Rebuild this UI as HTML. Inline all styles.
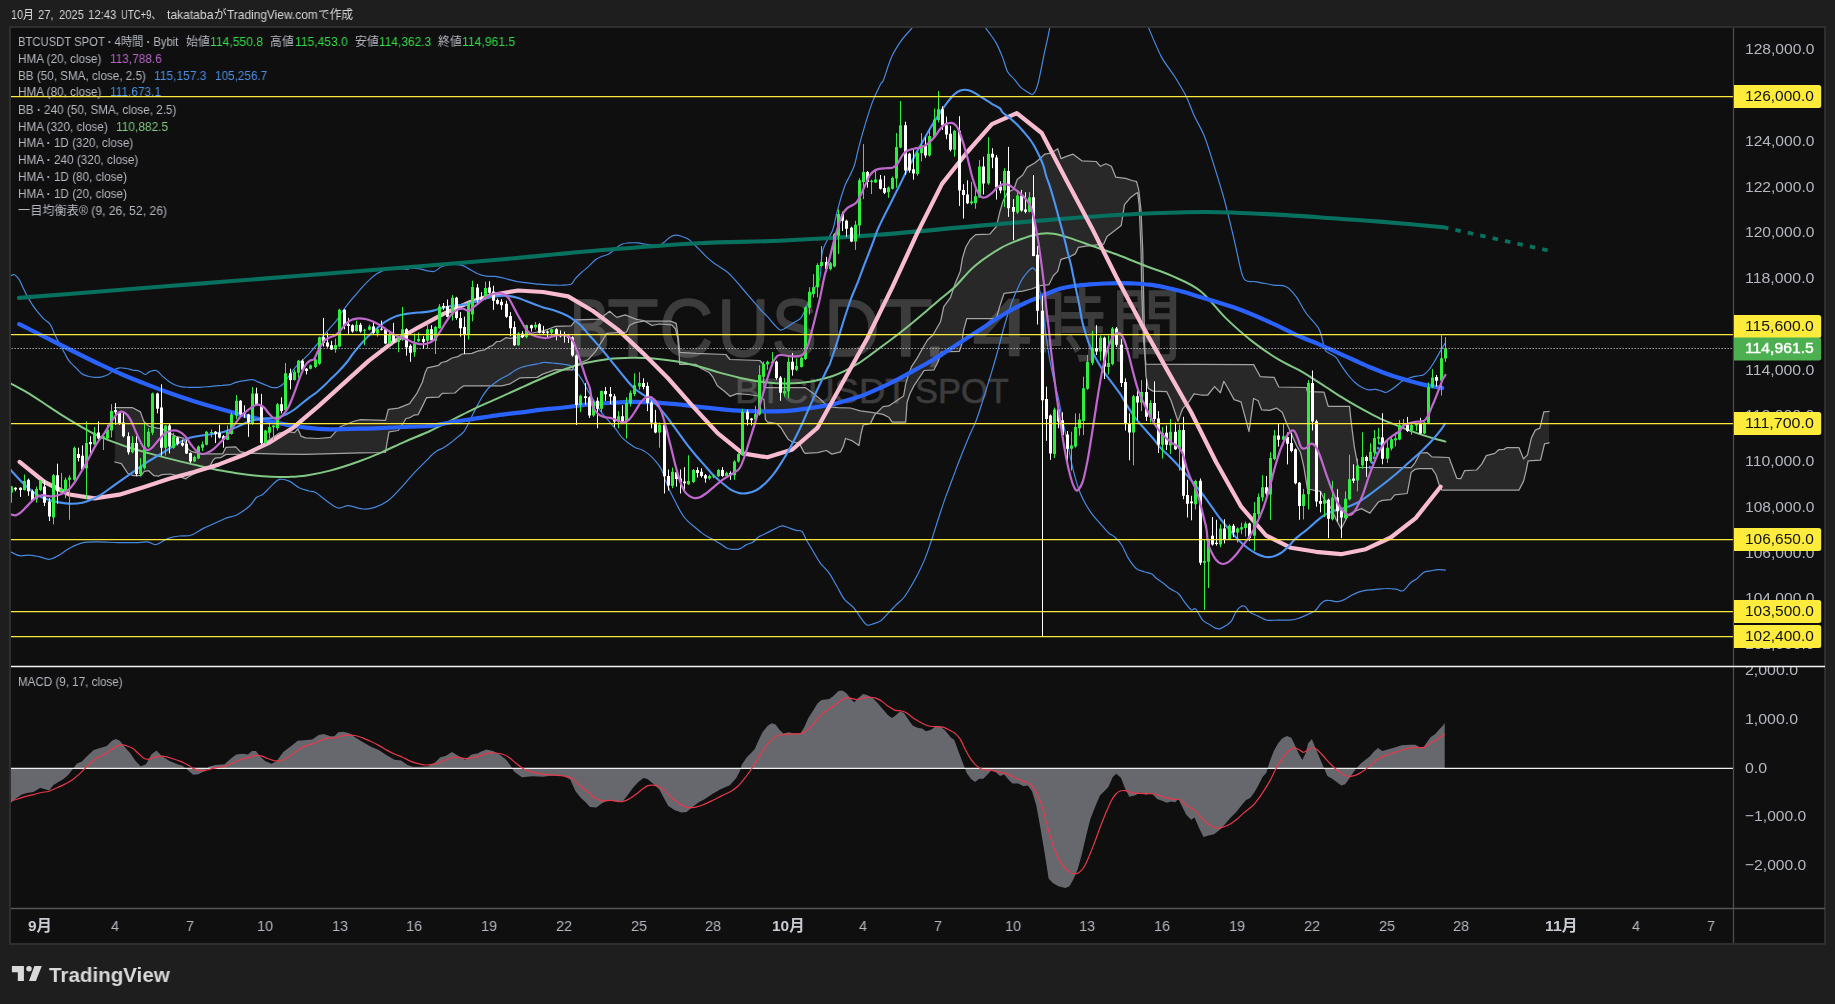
<!DOCTYPE html>
<html lang="ja"><head><meta charset="utf-8"><title>BTCUSDT SPOT 4時間</title>
<style>
html,body{margin:0;padding:0;background:#1e1e1e;}
body{width:1835px;height:1004px;position:relative;overflow:hidden;font-family:'Liberation Sans','Noto Sans CJK JP',sans-serif;}
#frame{position:absolute;left:9px;top:26px;width:1813px;height:915px;border:2px solid #2e2e2e;background:#0f0f0f;}
svg{position:absolute;left:0;top:0;}
.t{position:absolute;white-space:pre;line-height:1.117;transform-origin:0 50%;display:block;will-change:transform;}
</style></head><body>
<div id="frame"></div>
<svg width="1835" height="1004" viewBox="0 0 1835 1004">
<defs><clipPath id="cm"><rect x="11" y="28" width="1722" height="637.5"/></clipPath><clipPath id="cd"><rect x="11" y="667" width="1722" height="241"/></clipPath></defs>
<g font-family="'Liberation Sans','Noto Sans CJK JP',sans-serif" fill="#ffffff" stroke="#ffffff" stroke-width="1.3" stroke-linejoin="round" opacity="0.185" text-anchor="middle" clip-path="url(#cm)">
<text xml:space="preserve"><tspan x="589.7" y="356.3" font-size="81.6" textLength="40.4" lengthAdjust="spacingAndGlyphs">B</tspan><tspan x="633.0" y="356.3" font-size="81.6" textLength="51.5" lengthAdjust="spacingAndGlyphs">T</tspan><tspan x="686.4" y="356.3" font-size="81.6" textLength="54.1" lengthAdjust="spacingAndGlyphs">C</tspan><tspan x="743.4" y="356.3" font-size="81.6" textLength="52.2" lengthAdjust="spacingAndGlyphs">U</tspan><tspan x="794.4" y="356.3" font-size="81.6" textLength="45.1" lengthAdjust="spacingAndGlyphs">S</tspan><tspan x="851.9" y="356.3" font-size="81.6" textLength="56.2" lengthAdjust="spacingAndGlyphs">D</tspan><tspan x="905.9" y="356.3" font-size="81.6" textLength="54.1" lengthAdjust="spacingAndGlyphs">T</tspan><tspan x="936.9" y="356.3" font-size="81.6" textLength="22.7" lengthAdjust="spacingAndGlyphs">,</tspan> <tspan x="1002.2" y="356.3" font-size="81.6" textLength="60.1" lengthAdjust="spacingAndGlyphs">4</tspan><tspan x="1070.3" y="354.5" font-size="79" textLength="70.1" lengthAdjust="spacingAndGlyphs">時</tspan><tspan x="1146.3" y="354.5" font-size="79" textLength="70.2" lengthAdjust="spacingAndGlyphs">間</tspan></text>
<text xml:space="preserve" y="403.2" font-size="35" stroke-width="0.5" text-anchor="start"><tspan x="735.1" textLength="171.9" lengthAdjust="spacingAndGlyphs">BTCUSDT</tspan> <tspan x="914.9" textLength="94" lengthAdjust="spacingAndGlyphs">SPOT</tspan></text>
</g>
<g clip-path="url(#cm)" fill="none" stroke-linejoin="round" stroke-linecap="round">
<path d="M114.8,462.0 L121.3,463.7 L127.9,473.5 L133.3,475.7 L141.0,475.7 L144.2,471.3 L148.6,470.7 L154.0,475.7 L158.4,476.2 L161.7,474.6 L170.4,474.0 L176.9,475.7 L185.7,478.9 L187.8,477.3 L192.2,474.6 L209.6,466.9 L212.9,460.4 L215.1,458.2 L220.5,457.7 L226.0,454.4 L246.7,454.1 L263.0,444.0 L279.4,433.1 L285.9,431.5 L294.6,432.6 L297.9,428.8 L301.2,436.4 L305.6,437.8 L318.1,438.5 L330.6,437.3 L336.9,430.3 L340.7,426.5 L353.2,421.5 L360.7,419.7 L385.5,420.3 L388.3,409.3 L398.3,408.1 L409.6,403.6 L416.7,393.7 L422.3,382.3 L425.2,372.4 L427.3,367.9 L438.6,365.3 L441.5,362.5 L446.4,361.4 L452.1,358.0 L457.8,356.6 L462.0,354.0 L471.9,353.3 L477.6,351.2 L484.7,349.8 L488.9,346.9 L492.5,345.5 L496.7,341.5 L500.3,341.3 L505.9,337.7 L510.2,338.4 L521.5,336.7 L530.0,333.5 L544.2,330.6 L549.9,328.5 L555.5,326.4 L571.3,325.9 L575.6,319.8 L599.7,319.1 L609.6,311.3 L616.7,317.4 L625.2,314.8 L636.5,319.4 L643.6,320.5 L652.1,325.5 L659.2,324.0 L671.9,324.8 L675.5,329.0 L677.6,337.5 L679.0,351.7 L679.7,364.4 L696.0,364.4 L701.7,368.7 L708.8,372.2 L713.0,377.2 L717.3,385.7 L724.4,391.3 L730.0,396.3 L737.1,393.6 L748.4,394.5 L758.3,396.0 L764.0,399.5 L765.4,419.3 L767.5,422.2 L776.8,423.6 L781.0,427.8 L785.3,434.9 L788.1,439.2 L792.3,442.0 L799.4,443.4 L803.7,451.9 L805.1,453.3 L817.8,452.6 L826.3,450.5 L832.0,454.1 L840.5,451.9 L843.3,446.3 L845.5,438.5 L851.8,440.6 L858.9,445.6 L861.1,433.5 L863.2,425.0 L870.3,423.6 L874.5,415.1 L883.0,406.6 L888.7,405.9 L897.2,400.2 L903.6,396.0 L905.7,383.9 L907.8,376.8 L911.4,366.9 L917.0,358.4 L924.1,345.7 L927.5,340.0 L932.9,335.0 L940.5,321.8 L943.8,306.5 L950.4,297.7 L954.8,284.6 L960.2,271.4 L962.4,258.3 L965.7,247.3 L970.1,239.7 L975.6,234.6 L989.8,234.2 L996.4,226.5 L999.7,212.3 L1003.0,201.3 L1007.3,192.6 L1013.9,189.3 L1017.2,179.4 L1022.7,175.0 L1027.1,167.4 L1034.7,163.0 L1040.2,158.6 L1044.6,154.2 L1051.2,153.1 L1057.7,148.8 L1061.0,158.6 L1066.5,156.4 L1073.1,154.2 L1081.8,160.8 L1096.1,161.5 L1100.4,166.3 L1105.9,163.7 L1111.4,166.3 L1115.8,177.2 L1125.6,178.3 L1132.2,180.5 L1136.6,181.6 L1138.8,190.4 L1141.0,210.1 L1142.7,249.5 L1143.6,293.3 L1144.8,350.0 L1145.9,375.6 L1148.2,388.2 L1152.8,391.1 L1166.6,391.6 L1171.1,400.8 L1175.7,414.5 L1178.0,421.4 L1182.6,408.8 L1189.5,400.8 L1194.0,393.9 L1200.9,395.0 L1207.8,395.0 L1214.6,386.6 L1220.4,392.7 L1223.8,381.3 L1228.4,389.3 L1234.1,399.6 L1241.0,401.9 L1249.0,431.7 L1253.6,398.5 L1258.2,400.8 L1261.6,409.9 L1269.6,410.4 L1276.5,408.1 L1282.2,412.2 L1286.8,423.7 L1291.4,434.0 L1297.1,446.6 L1300.5,452.3 L1303.9,467.2 L1307.4,489.0 L1320.6,491.4 L1324.0,498.7 L1330.9,507.9 L1336.5,520.3 L1341.1,528.8 L1348.3,515.1 L1353.5,511.8 L1361.4,508.6 L1369.9,513.1 L1378.4,502.0 L1382.3,500.4 L1390.8,499.7 L1394.7,494.8 L1407.2,493.5 L1409.1,483.7 L1411.1,472.6 L1415.0,469.3 L1418.9,468.7 L1432.0,468.7 L1435.9,474.5 L1439.2,485.0 L1441.8,490.0 L1519.0,490.0 L1523.6,481.1 L1526.2,470.6 L1528.1,460.8 L1540.6,460.2 L1544.5,443.8 L1549.1,442.9 L1549.1,411.5 L1543.8,411.8 L1539.9,428.1 L1535.3,430.1 L1531.4,437.9 L1527.5,454.9 L1523.6,458.9 L1519.0,447.7 L1506.6,447.7 L1503.9,449.4 L1498.7,449.7 L1494.8,453.4 L1486.3,455.6 L1481.7,464.1 L1476.5,470.0 L1464.7,470.6 L1460.8,478.7 L1456.9,478.5 L1452.9,468.0 L1449.0,457.5 L1432.0,456.9 L1427.4,452.7 L1420.2,453.0 L1415.0,462.8 L1411.1,467.7 L1358.1,467.4 L1354.2,445.8 L1350.9,419.6 L1349.5,406.3 L1328.2,406.3 L1324.0,392.1 L1307.4,391.6 L1306.2,387.5 L1278.8,387.0 L1274.2,377.4 L1260.4,376.7 L1253.6,364.6 L1145.9,364.1 L1143.5,340.0 L1141.8,293.3 L1141.0,249.5 L1139.2,205.7 L1137.7,192.6 L1135.5,193.7 L1130.0,198.1 L1124.5,204.6 L1121.2,225.4 L1115.8,229.8 L1107.0,236.4 L1103.7,244.1 L1086.2,246.2 L1078.5,247.3 L1075.2,253.9 L1068.7,257.2 L1061.0,259.4 L1057.7,271.4 L1053.3,275.8 L1049.0,284.6 L1040.2,285.7 L1031.4,289.0 L1022.7,291.2 L1004.1,293.3 L999.7,306.5 L996.4,318.5 L966.8,318.5 L963.5,330.6 L961.7,344.3 L959.3,351.4 L941.1,352.0 L938.3,361.3 L934.0,369.8 L924.1,370.5 L919.9,376.8 L914.2,385.3 L909.9,393.8 L907.1,402.3 L905.7,422.2 L892.2,422.2 L888.7,417.2 L883.0,414.4 L871.7,412.3 L860.3,410.8 L850.4,408.0 L837.7,407.7 L827.8,406.6 L820.7,399.5 L812.2,392.4 L805.1,387.5 L764.0,387.5 L763.0,364.0 L759.8,360.5 L730.0,359.5 L725.8,354.5 L696.0,353.4 L679.7,352.4 L678.3,337.5 L676.2,323.3 L670.5,321.2 L643.6,321.2 L635.1,322.6 L629.4,325.5 L626.6,332.1 L606.8,333.3 L602.5,340.3 L595.4,351.7 L588.3,359.5 L573.5,365.8 L572.8,369.8 L555.5,369.6 L542.8,374.1 L537.1,377.4 L520.1,377.8 L515.9,380.2 L510.2,383.8 L501.7,385.9 L463.4,385.9 L459.2,389.1 L454.9,393.0 L442.2,393.4 L438.6,397.2 L426.6,397.6 L422.3,406.4 L418.1,414.6 L413.8,415.2 L409.6,417.8 L406.0,418.5 L403.9,422.0 L398.3,430.5 L389.0,431.9 L386.9,443.3 L385.5,452.5 L360.0,452.9 L305.0,454.4 L279.4,454.1 L248.9,453.3 L240.2,451.7 L235.8,446.8 L226.0,447.3 L222.7,453.9 L200.9,453.9 L192.2,451.7 L188.4,449.5 L183.5,438.1 L175.8,436.4 L161.7,428.6 L157.3,428.2 L148.6,426.1 L143.7,421.2 L140.4,411.9 L132.2,407.5 L114.8,407.5Z" fill="#ffffff" fill-opacity="0.105" stroke="none"/>
<path d="M114.8,407.5 L132.2,407.5 L140.4,411.9 L143.7,421.2 L148.6,426.1 L157.3,428.2 L161.7,428.6 L175.8,436.4 L183.5,438.1 L188.4,449.5 L192.2,451.7 L200.9,453.9 L222.7,453.9 L226.0,447.3 L235.8,446.8 L240.2,451.7 L248.9,453.3 L279.4,454.1 L305.0,454.4 L360.0,452.9 L385.5,452.5 L386.9,443.3 L389.0,431.9 L398.3,430.5 L403.9,422.0 L406.0,418.5 L409.6,417.8 L413.8,415.2 L418.1,414.6 L422.3,406.4 L426.6,397.6 L438.6,397.2 L442.2,393.4 L454.9,393.0 L459.2,389.1 L463.4,385.9 L501.7,385.9 L510.2,383.8 L515.9,380.2 L520.1,377.8 L537.1,377.4 L542.8,374.1 L555.5,369.6 L572.8,369.8 L573.5,365.8 L588.3,359.5 L595.4,351.7 L602.5,340.3 L606.8,333.3 L626.6,332.1 L629.4,325.5 L635.1,322.6 L643.6,321.2 L670.5,321.2 L676.2,323.3 L678.3,337.5 L679.7,352.4 L696.0,353.4 L725.8,354.5 L730.0,359.5 L759.8,360.5 L763.0,364.0 L764.0,387.5 L805.1,387.5 L812.2,392.4 L820.7,399.5 L827.8,406.6 L837.7,407.7 L850.4,408.0 L860.3,410.8 L871.7,412.3 L883.0,414.4 L888.7,417.2 L892.2,422.2 L905.7,422.2 L907.1,402.3 L909.9,393.8 L914.2,385.3 L919.9,376.8 L924.1,370.5 L934.0,369.8 L938.3,361.3 L941.1,352.0 L959.3,351.4 L961.7,344.3 L963.5,330.6 L966.8,318.5 L996.4,318.5 L999.7,306.5 L1004.1,293.3 L1022.7,291.2 L1031.4,289.0 L1040.2,285.7 L1049.0,284.6 L1053.3,275.8 L1057.7,271.4 L1061.0,259.4 L1068.7,257.2 L1075.2,253.9 L1078.5,247.3 L1086.2,246.2 L1103.7,244.1 L1107.0,236.4 L1115.8,229.8 L1121.2,225.4 L1124.5,204.6 L1130.0,198.1 L1135.5,193.7 L1137.7,192.6 L1139.2,205.7 L1141.0,249.5 L1141.8,293.3 L1143.5,340.0 L1145.9,364.1 L1253.6,364.6 L1260.4,376.7 L1274.2,377.4 L1278.8,387.0 L1306.2,387.5 L1307.4,391.6 L1324.0,392.1 L1328.2,406.3 L1349.5,406.3 L1350.9,419.6 L1354.2,445.8 L1358.1,467.4 L1411.1,467.7 L1415.0,462.8 L1420.2,453.0 L1427.4,452.7 L1432.0,456.9 L1449.0,457.5 L1452.9,468.0 L1456.9,478.5 L1460.8,478.7 L1464.7,470.6 L1476.5,470.0 L1481.7,464.1 L1486.3,455.6 L1494.8,453.4 L1498.7,449.7 L1503.9,449.4 L1506.6,447.7 L1519.0,447.7 L1523.6,458.9 L1527.5,454.9 L1531.4,437.9 L1535.3,430.1 L1539.9,428.1 L1543.8,411.8 L1549.1,411.5" stroke="#a4a4a4" stroke-width="1.25"/>
<path d="M114.8,462.0 L121.3,463.7 L127.9,473.5 L133.3,475.7 L141.0,475.7 L144.2,471.3 L148.6,470.7 L154.0,475.7 L158.4,476.2 L161.7,474.6 L170.4,474.0 L176.9,475.7 L185.7,478.9 L187.8,477.3 L192.2,474.6 L209.6,466.9 L212.9,460.4 L215.1,458.2 L220.5,457.7 L226.0,454.4 L246.7,454.1 L263.0,444.0 L279.4,433.1 L285.9,431.5 L294.6,432.6 L297.9,428.8 L301.2,436.4 L305.6,437.8 L318.1,438.5 L330.6,437.3 L336.9,430.3 L340.7,426.5 L353.2,421.5 L360.7,419.7 L385.5,420.3 L388.3,409.3 L398.3,408.1 L409.6,403.6 L416.7,393.7 L422.3,382.3 L425.2,372.4 L427.3,367.9 L438.6,365.3 L441.5,362.5 L446.4,361.4 L452.1,358.0 L457.8,356.6 L462.0,354.0 L471.9,353.3 L477.6,351.2 L484.7,349.8 L488.9,346.9 L492.5,345.5 L496.7,341.5 L500.3,341.3 L505.9,337.7 L510.2,338.4 L521.5,336.7 L530.0,333.5 L544.2,330.6 L549.9,328.5 L555.5,326.4 L571.3,325.9 L575.6,319.8 L599.7,319.1 L609.6,311.3 L616.7,317.4 L625.2,314.8 L636.5,319.4 L643.6,320.5 L652.1,325.5 L659.2,324.0 L671.9,324.8 L675.5,329.0 L677.6,337.5 L679.0,351.7 L679.7,364.4 L696.0,364.4 L701.7,368.7 L708.8,372.2 L713.0,377.2 L717.3,385.7 L724.4,391.3 L730.0,396.3 L737.1,393.6 L748.4,394.5 L758.3,396.0 L764.0,399.5 L765.4,419.3 L767.5,422.2 L776.8,423.6 L781.0,427.8 L785.3,434.9 L788.1,439.2 L792.3,442.0 L799.4,443.4 L803.7,451.9 L805.1,453.3 L817.8,452.6 L826.3,450.5 L832.0,454.1 L840.5,451.9 L843.3,446.3 L845.5,438.5 L851.8,440.6 L858.9,445.6 L861.1,433.5 L863.2,425.0 L870.3,423.6 L874.5,415.1 L883.0,406.6 L888.7,405.9 L897.2,400.2 L903.6,396.0 L905.7,383.9 L907.8,376.8 L911.4,366.9 L917.0,358.4 L924.1,345.7 L927.5,340.0 L932.9,335.0 L940.5,321.8 L943.8,306.5 L950.4,297.7 L954.8,284.6 L960.2,271.4 L962.4,258.3 L965.7,247.3 L970.1,239.7 L975.6,234.6 L989.8,234.2 L996.4,226.5 L999.7,212.3 L1003.0,201.3 L1007.3,192.6 L1013.9,189.3 L1017.2,179.4 L1022.7,175.0 L1027.1,167.4 L1034.7,163.0 L1040.2,158.6 L1044.6,154.2 L1051.2,153.1 L1057.7,148.8 L1061.0,158.6 L1066.5,156.4 L1073.1,154.2 L1081.8,160.8 L1096.1,161.5 L1100.4,166.3 L1105.9,163.7 L1111.4,166.3 L1115.8,177.2 L1125.6,178.3 L1132.2,180.5 L1136.6,181.6 L1138.8,190.4 L1141.0,210.1 L1142.7,249.5 L1143.6,293.3 L1144.8,350.0 L1145.9,375.6 L1148.2,388.2 L1152.8,391.1 L1166.6,391.6 L1171.1,400.8 L1175.7,414.5 L1178.0,421.4 L1182.6,408.8 L1189.5,400.8 L1194.0,393.9 L1200.9,395.0 L1207.8,395.0 L1214.6,386.6 L1220.4,392.7 L1223.8,381.3 L1228.4,389.3 L1234.1,399.6 L1241.0,401.9 L1249.0,431.7 L1253.6,398.5 L1258.2,400.8 L1261.6,409.9 L1269.6,410.4 L1276.5,408.1 L1282.2,412.2 L1286.8,423.7 L1291.4,434.0 L1297.1,446.6 L1300.5,452.3 L1303.9,467.2 L1307.4,489.0 L1320.6,491.4 L1324.0,498.7 L1330.9,507.9 L1336.5,520.3 L1341.1,528.8 L1348.3,515.1 L1353.5,511.8 L1361.4,508.6 L1369.9,513.1 L1378.4,502.0 L1382.3,500.4 L1390.8,499.7 L1394.7,494.8 L1407.2,493.5 L1409.1,483.7 L1411.1,472.6 L1415.0,469.3 L1418.9,468.7 L1432.0,468.7 L1435.9,474.5 L1439.2,485.0 L1441.8,490.0 L1519.0,490.0 L1523.6,481.1 L1526.2,470.6 L1528.1,460.8 L1540.6,460.2 L1544.5,443.8 L1549.1,442.9" stroke="#a4a4a4" stroke-width="1.25"/>
<path d="M11.1,275.6 C11.7,275.4 13.2,274.1 14.5,274.7 C15.8,275.3 17.4,276.8 18.9,279.1 C20.4,281.4 21.9,285.5 23.4,288.5 C24.9,291.6 26.4,294.8 27.9,297.4 C29.4,300.1 30.9,302.4 32.3,304.6 C33.8,306.8 34.9,308.5 36.8,310.9 C38.7,313.2 41.3,316.4 43.5,318.7 C45.7,320.9 48.4,321.7 50.2,324.3 C52.1,326.9 53.2,331.1 54.7,334.3 C56.2,337.5 57.5,340.1 59.2,343.2 C60.8,346.4 63.1,350.3 64.7,353.3 C66.4,356.3 67.5,358.9 69.2,361.1 C70.9,363.4 72.7,364.7 74.8,366.7 C76.8,368.8 79.3,371.8 81.5,373.4 C83.7,375.0 86.0,375.6 88.2,376.3 C90.4,377.0 92.7,377.4 94.9,377.4 C97.1,377.5 99.4,377.2 101.6,376.8 C103.8,376.3 106.3,375.6 108.3,374.5 C110.4,373.4 112.0,371.2 113.9,370.1 C115.7,368.9 117.4,368.1 119.5,367.8 C121.5,367.6 123.9,368.1 126.2,368.5 C128.4,368.9 130.6,369.6 132.9,370.1 C135.1,370.5 137.5,370.4 139.6,371.2 C141.6,371.9 143.5,374.5 145.2,374.5 C146.8,374.6 147.8,372.3 149.6,371.6 C151.5,371.0 154.3,369.8 156.3,370.5 C158.4,371.2 159.9,373.9 161.9,375.6 C164.0,377.4 166.4,379.7 168.6,381.2 C170.9,382.8 173.1,384.1 175.3,385.0 C177.6,386.0 179.8,386.4 182.0,386.8 C184.3,387.2 185.8,387.2 188.7,387.3 C191.7,387.3 196.2,387.4 199.9,387.3 C203.6,387.1 207.3,386.7 211.1,386.4 C214.8,386.0 219.1,385.5 222.2,385.3 C225.4,385.0 227.8,385.1 230.1,384.6 C232.3,384.1 233.2,383.0 235.6,382.3 C238.1,381.7 241.8,381.0 244.6,380.6 C247.4,380.1 250.2,379.4 252.4,379.7 C254.6,379.9 255.9,381.1 258.0,381.9 C260.0,382.7 262.5,383.7 264.7,384.6 C266.9,385.5 269.2,386.8 271.4,387.3 C273.6,387.7 276.0,387.9 278.1,387.3 C280.1,386.6 281.8,385.4 283.7,383.5 C285.5,381.5 287.2,378.4 289.3,375.6 C291.3,372.9 293.7,369.3 296.0,366.7 C298.2,364.1 300.4,362.2 302.7,360.0 C304.9,357.8 307.1,355.7 309.4,353.3 C311.6,350.9 313.8,348.3 316.1,345.5 C318.3,342.7 320.5,339.3 322.8,336.5 C325.0,333.8 327.2,331.3 329.5,328.7 C331.7,326.1 333.9,323.9 336.2,320.9 C338.4,317.9 340.7,314.0 342.9,310.9 C345.1,307.7 347.4,304.7 349.6,301.9 C351.8,299.1 354.1,296.7 356.3,294.1 C358.5,291.5 360.8,288.7 363.0,286.3 C365.2,283.9 367.5,281.6 369.7,279.6 C371.9,277.5 374.2,275.5 376.4,274.0 C378.6,272.5 380.9,271.5 383.1,270.6 C385.3,269.8 387.2,269.2 389.8,268.9 C392.4,268.5 395.8,268.3 398.7,268.4 C401.7,268.5 405.8,269.6 407.7,269.5 C409.6,269.5 408.1,268.3 410.0,268.2 C411.9,268.0 416.0,268.2 418.9,268.6 C421.9,269.1 425.3,270.4 427.9,270.9 C430.5,271.3 432.3,272.0 434.6,271.3 C436.8,270.6 438.7,268.0 441.3,266.8 C443.9,265.6 447.6,264.5 450.2,264.2 C452.8,263.8 454.7,264.3 456.9,264.6 C459.2,264.9 461.4,265.1 463.6,265.9 C465.9,266.8 468.1,268.5 470.3,269.7 C472.6,271.0 475.0,272.6 477.0,273.5 C479.1,274.5 480.7,274.8 482.6,275.3 C484.5,275.8 486.1,276.3 488.2,276.4 C490.2,276.6 492.7,276.3 494.9,276.4 C497.1,276.6 499.4,277.1 501.6,277.6 C503.8,278.0 505.7,278.7 508.3,279.3 C510.9,280.0 514.3,281.0 517.2,281.6 C520.2,282.1 523.2,282.3 526.2,282.7 C529.2,283.1 532.1,283.5 535.1,283.8 C538.1,284.1 541.1,284.5 544.0,284.7 C547.0,284.9 550.0,285.1 553.0,285.2 C556.0,285.2 558.9,285.3 561.9,285.2 C564.9,285.0 568.6,285.3 570.9,284.3 C573.1,283.2 573.5,280.7 575.3,278.7 C577.2,276.6 579.8,274.0 582.0,272.0 C584.3,269.9 586.5,268.4 588.7,266.4 C591.0,264.3 593.2,261.4 595.4,259.7 C597.7,258.0 599.9,257.3 602.1,256.3 C604.4,255.4 606.6,255.4 608.8,254.1 C611.1,252.8 613.3,250.2 615.5,248.5 C617.8,246.8 620.0,245.0 622.2,244.0 C624.5,243.1 626.3,243.1 628.9,242.9 C631.6,242.7 635.3,242.7 637.9,242.9 C640.5,243.1 642.4,243.7 644.6,244.0 C646.8,244.4 649.1,244.8 651.3,245.2 C653.5,245.5 655.8,246.8 658.0,246.3 C660.2,245.7 662.6,243.4 664.7,241.8 C666.7,240.2 668.4,238.0 670.3,236.9 C672.1,235.8 674.0,235.2 675.9,235.1 C677.7,235.0 679.4,235.6 681.4,236.2 C683.5,236.9 686.1,237.8 688.2,239.1 C690.2,240.4 691.7,242.1 693.7,244.0 C695.8,246.0 698.2,248.5 700.4,250.7 C702.7,253.0 704.9,255.4 707.1,257.4 C709.4,259.5 711.6,261.4 713.8,263.0 C716.1,264.7 718.3,266.0 720.5,267.5 C722.8,269.0 725.0,270.1 727.2,272.0 C729.5,273.8 731.7,276.3 733.9,278.7 C736.2,281.1 738.4,283.9 740.7,286.5 C742.9,289.1 745.1,291.7 747.4,294.3 C749.6,296.9 751.8,299.5 754.1,302.1 C756.3,304.7 758.5,307.5 760.8,310.0 C763.0,312.4 765.2,314.2 767.5,316.7 C769.7,319.1 771.9,322.2 774.2,324.5 C776.4,326.7 778.6,329.7 780.9,330.1 C783.1,330.4 785.3,328.0 787.6,326.7 C789.8,325.4 792.0,323.7 794.3,322.2 C796.5,320.7 798.9,320.4 801.0,317.8 C803.0,315.2 805.1,310.0 806.6,306.6 C808.0,303.2 808.6,300.6 809.9,297.7 C811.2,294.7 812.7,292.1 814.4,288.7 C816.1,285.4 818.6,283.9 820.0,277.6 C821.4,271.2 820.6,258.4 822.7,250.5 C824.8,242.6 830.4,236.0 832.7,230.0 C835.0,224.0 835.0,219.8 836.4,214.5 C837.8,209.2 839.4,203.0 840.9,198.0 C842.4,193.0 843.9,188.3 845.4,184.6 C846.9,180.9 848.4,178.8 849.9,175.6 C851.4,172.4 852.9,169.9 854.4,165.2 C855.9,160.5 857.3,152.9 858.8,147.2 C860.3,141.5 861.8,136.0 863.3,130.8 C864.8,125.6 866.3,120.6 867.8,115.9 C869.3,111.2 870.8,106.4 872.3,102.4 C873.8,98.4 875.3,95.2 876.8,92.0 C878.3,88.8 880.1,85.0 881.2,83.0 C882.3,81.0 881.7,84.4 883.5,80.0 C885.3,75.6 888.7,63.2 891.8,56.6 C894.8,49.9 898.3,44.8 901.6,40.1 C904.9,35.5 909.0,31.7 911.5,28.6 C914.0,25.6 915.6,23.2 916.4,22.1" stroke="#4689e0" stroke-width="1.2"/>
<path d="M981.0,15.0 C981.7,17.0 983.6,23.8 985.2,27.0 C986.8,30.2 988.6,31.8 990.5,34.5 C992.4,37.2 994.4,39.7 996.4,43.4 C998.4,47.1 1000.5,52.2 1002.4,56.9 C1004.3,61.6 1005.6,68.1 1007.6,71.8 C1009.6,75.5 1012.3,76.8 1014.4,79.3 C1016.5,81.8 1018.3,84.8 1020.3,86.8 C1022.3,88.8 1024.3,89.9 1026.3,91.2 C1028.3,92.5 1030.7,94.8 1032.3,94.5 C1033.9,94.2 1035.0,91.7 1036.0,89.7 C1037.0,87.7 1037.4,85.8 1038.3,82.3 C1039.2,78.8 1040.2,73.5 1041.2,68.8 C1042.2,64.1 1043.2,58.6 1044.2,53.9 C1045.2,49.2 1046.2,44.9 1047.2,40.4 C1048.2,35.9 1049.1,31.2 1049.9,27.0 C1050.7,22.8 1051.7,17.0 1052.0,15.0" stroke="#4689e0" stroke-width="1.2"/>
<path d="M1145.5,22.1 C1146.0,22.9 1145.5,21.2 1148.2,27.0 C1150.8,32.8 1156.9,48.4 1161.3,56.6 C1165.7,64.8 1170.4,69.7 1174.5,76.3 C1178.6,82.9 1182.7,89.5 1186.0,96.0 C1189.3,102.6 1191.2,109.2 1194.2,115.8 C1197.2,122.3 1200.8,127.3 1204.1,135.5 C1207.4,143.7 1210.6,154.7 1213.9,165.1 C1217.2,175.5 1220.5,185.9 1223.8,197.9 C1227.1,210.0 1230.9,225.9 1233.6,237.4 C1236.4,248.9 1238.3,259.9 1240.2,267.0 C1242.1,274.1 1242.4,277.7 1245.2,280.1 C1247.9,282.6 1252.0,280.9 1256.7,281.8 C1261.3,282.6 1268.2,284.2 1273.1,285.1 C1278.0,285.9 1282.4,284.8 1286.2,286.7 C1290.1,288.6 1292.8,292.2 1296.1,296.6 C1299.4,300.9 1302.1,307.5 1306.0,313.0 C1309.8,318.5 1316.0,323.4 1319.1,329.4 C1322.2,335.4 1323.1,345.0 1324.7,348.9 C1326.3,352.8 1327.1,351.6 1328.9,353.0 C1330.7,354.4 1333.7,355.1 1335.7,357.1 C1337.8,359.2 1339.1,362.3 1341.2,365.3 C1343.3,368.3 1345.8,372.1 1348.1,375.0 C1350.4,377.9 1352.7,380.4 1355.0,382.5 C1357.3,384.6 1359.5,386.1 1361.8,387.3 C1364.1,388.5 1366.4,389.5 1368.7,389.8 C1371.0,390.1 1373.3,389.1 1375.6,389.4 C1377.9,389.7 1380.7,390.9 1382.4,391.4 C1384.1,391.9 1384.5,392.7 1385.9,392.5 C1387.3,392.3 1389.0,391.2 1390.7,390.1 C1392.4,389.0 1394.2,387.6 1396.2,386.0 C1398.2,384.4 1400.7,381.9 1403.0,380.5 C1405.3,379.1 1407.6,378.4 1409.9,377.7 C1412.2,377.0 1414.5,376.6 1416.8,376.1 C1419.1,375.6 1421.6,375.8 1423.7,374.7 C1425.8,373.6 1427.4,371.8 1429.2,369.5 C1431.0,367.2 1432.8,364.2 1434.6,361.2 C1436.4,358.2 1438.4,354.6 1440.1,351.6 C1441.8,348.6 1444.2,344.8 1445.0,343.4" stroke="#4689e0" stroke-width="1.2"/>
<path d="M10.5,551.8 C12.1,552.4 16.5,555.2 19.7,555.7 C22.9,556.3 26.3,554.9 29.6,555.1 C32.9,555.2 36.2,556.0 39.4,556.7 C42.7,557.4 46.0,559.6 49.3,559.3 C52.6,559.1 55.9,556.9 59.2,555.1 C62.5,553.2 65.2,550.5 69.0,548.5 C72.9,546.5 77.3,544.0 82.2,542.9 C87.1,541.8 92.6,542.0 98.6,541.9 C104.6,541.9 111.8,542.5 118.3,542.6 C124.9,542.7 133.1,542.7 138.1,542.6 C143.0,542.5 144.9,541.6 147.9,541.9 C150.9,542.2 152.9,545.1 156.1,544.5 C159.4,544.0 163.8,540.0 167.7,538.6 C171.5,537.2 175.3,536.5 179.2,536.0 C183.0,535.4 186.6,536.6 190.7,535.3 C194.8,534.0 199.4,530.3 203.8,528.1 C208.2,525.9 213.1,523.9 217.0,522.2 C220.8,520.5 223.5,519.1 226.8,517.9 C230.1,516.7 232.9,517.0 236.7,515.0 C240.5,512.9 246.5,508.7 249.8,505.7 C253.1,502.8 254.2,499.4 256.4,497.5 C258.6,495.6 260.2,496.4 263.0,494.2 C265.7,492.0 270.1,486.8 272.8,484.4 C275.6,481.9 276.7,480.0 279.4,479.4 C282.2,478.9 286.0,479.7 289.3,481.1 C292.6,482.5 295.9,486.0 299.1,487.7 C302.4,489.3 306.3,490.1 309.0,491.0 C311.7,491.8 312.3,490.7 315.6,492.6 C318.9,494.5 324.9,499.9 328.7,502.5 C332.6,505.0 335.3,507.5 338.6,508.0 C341.9,508.6 344.3,505.6 348.5,505.7 C352.6,505.9 358.9,508.8 363.2,509.0 C367.6,509.3 370.6,508.8 374.8,507.4 C378.9,506.0 383.5,504.1 387.9,500.8 C392.3,497.5 396.7,492.3 401.1,487.7 C405.4,483.0 409.8,477.5 414.2,472.9 C418.6,468.2 424.7,462.4 427.4,459.7 C430.0,457.0 428.4,458.1 430.0,456.7 C431.6,455.2 434.5,452.6 436.7,451.1 C438.9,449.6 441.2,449.0 443.4,447.7 C445.6,446.4 447.9,444.9 450.1,443.2 C452.3,441.6 454.6,439.5 456.8,437.7 C459.0,435.8 461.7,434.3 463.5,432.1 C465.4,429.8 466.5,427.1 468.0,424.3 C469.5,421.5 471.0,418.3 472.4,415.3 C473.9,412.3 475.2,409.6 476.9,406.4 C478.6,403.2 480.6,399.3 482.5,396.3 C484.4,393.4 486.0,390.7 488.1,388.5 C490.1,386.3 492.6,384.6 494.8,382.9 C497.0,381.3 499.3,379.8 501.5,378.5 C503.7,377.2 506.0,376.4 508.2,375.1 C510.4,373.8 512.7,371.9 514.9,370.6 C517.1,369.3 519.0,368.2 521.6,367.3 C524.2,366.4 527.6,365.7 530.5,365.1 C533.5,364.4 537.2,363.9 539.5,363.5 C541.7,363.0 541.7,362.4 543.9,362.4 C546.2,362.3 549.5,362.7 552.9,363.0 C556.2,363.4 561.1,363.9 564.0,364.4 C567.0,364.8 568.9,364.7 570.8,365.7 C572.6,366.8 573.4,368.3 575.2,370.6 C577.1,372.9 579.7,376.0 581.9,379.6 C584.2,383.1 586.4,388.0 588.6,391.9 C590.9,395.8 593.1,399.5 595.3,403.0 C597.6,406.6 599.8,410.1 602.0,413.1 C604.3,416.1 606.5,418.3 608.7,420.9 C611.0,423.5 613.2,425.9 615.4,428.7 C617.7,431.5 619.9,435.2 622.1,437.7 C624.4,440.1 626.6,441.6 628.8,443.2 C631.1,444.9 633.3,446.6 635.5,447.7 C637.8,448.8 640.0,448.8 642.2,450.0 C644.5,451.1 646.7,452.6 648.9,454.4 C651.2,456.3 653.6,458.7 655.6,461.1 C657.7,463.5 659.7,466.1 661.2,468.9 C662.7,471.7 663.3,474.5 664.6,477.9 C665.9,481.2 667.6,485.7 669.1,489.0 C670.5,492.4 672.0,495.0 673.5,498.0 C675.0,501.0 676.5,504.1 678.0,506.9 C679.5,509.7 680.8,512.3 682.5,514.7 C684.1,517.2 686.0,519.4 688.0,521.4 C690.1,523.5 692.5,525.2 694.7,527.0 C697.0,528.9 699.2,530.9 701.4,532.6 C703.7,534.3 705.9,535.8 708.2,537.1 C710.4,538.4 712.8,539.3 714.9,540.4 C716.9,541.6 718.4,542.5 720.4,543.8 C722.5,545.1 725.1,547.3 727.1,548.3 C729.2,549.2 730.7,549.3 732.7,549.4 C734.8,549.5 737.2,549.7 739.4,548.9 C741.7,548.2 743.9,546.0 746.1,544.9 C748.4,543.8 750.8,543.5 752.8,542.2 C754.9,540.9 756.4,538.5 758.4,537.1 C760.5,535.7 762.9,534.8 765.1,533.7 C767.4,532.6 769.6,531.5 771.8,530.4 C774.1,529.3 776.7,527.8 778.5,527.0 C780.4,526.3 781.1,525.7 783.0,525.9 C784.9,526.1 787.5,527.4 789.7,528.1 C791.9,528.9 794.4,529.8 796.4,530.4 C798.4,530.9 800.3,529.8 802.0,531.5 C803.7,533.2 804.8,537.2 806.7,540.5 C808.6,543.9 811.2,548.0 813.4,551.7 C815.6,555.4 817.5,559.3 820.1,562.9 C822.7,566.4 826.3,569.0 829.0,572.9 C831.8,576.8 834.3,581.9 836.9,586.3 C839.5,590.8 841.9,596.2 844.7,599.7 C847.5,603.3 850.8,604.4 853.6,607.6 C856.4,610.7 859.2,615.8 861.4,618.7 C863.7,621.6 865.0,624.2 867.0,625.0 C869.1,625.8 871.5,624.3 873.7,623.6 C876.0,623.0 878.0,622.7 880.4,621.0 C882.8,619.2 885.6,615.8 888.2,613.1 C890.9,610.5 893.5,607.5 896.1,604.9 C898.7,602.3 901.3,600.8 903.9,597.5 C906.5,594.2 909.3,589.3 911.7,585.2 C914.1,581.1 916.2,577.4 918.4,572.9 C920.6,568.5 922.9,564.0 925.1,558.4 C927.3,552.8 929.6,546.1 931.8,539.4 C934.0,532.7 936.3,525.1 938.5,518.2 C940.8,511.3 943.0,504.4 945.2,498.1 C947.5,491.8 949.7,486.2 951.9,480.2 C954.2,474.3 955.9,469.4 958.6,462.3 C961.4,455.3 965.5,444.9 968.5,437.8 C971.5,430.7 973.9,426.6 976.4,420.0 C978.9,413.4 981.1,405.8 983.4,398.5 C985.7,391.2 988.1,383.9 990.4,376.2 C992.7,368.5 995.0,360.9 997.3,352.5 C999.6,344.1 1002.0,334.1 1004.3,326.0 C1006.6,317.9 1009.0,310.2 1011.3,303.7 C1013.6,297.2 1016.6,290.9 1018.3,287.0 C1020.0,283.1 1020.2,282.5 1021.7,280.0 C1023.2,277.5 1025.7,274.1 1027.5,272.1 C1029.3,270.1 1031.3,268.3 1032.5,267.9 C1033.7,267.5 1034.1,268.5 1034.9,269.6 C1035.7,270.7 1036.6,271.1 1037.4,274.6 C1038.2,278.1 1038.7,284.1 1039.7,290.4 C1040.6,296.7 1041.9,304.6 1043.0,312.3 C1044.1,320.0 1045.1,328.7 1046.2,336.4 C1047.3,344.1 1048.3,351.0 1049.5,358.3 C1050.8,365.6 1052.4,373.6 1053.9,380.2 C1055.4,386.8 1057.0,391.9 1058.3,397.7 C1059.6,403.6 1060.5,409.8 1061.6,415.2 C1062.7,420.7 1063.8,425.5 1064.9,430.6 C1066.0,435.7 1067.1,440.6 1068.1,445.9 C1069.2,451.2 1070.2,456.6 1071.4,462.3 C1072.7,468.1 1074.4,475.0 1075.9,480.2 C1077.4,485.4 1078.7,489.5 1080.4,493.6 C1082.1,497.7 1083.9,501.3 1086.0,504.8 C1088.0,508.3 1090.3,511.7 1092.7,514.8 C1095.1,518.0 1097.9,520.8 1100.5,523.8 C1103.1,526.8 1105.9,530.5 1108.3,532.7 C1110.7,535.0 1112.8,535.1 1115.0,537.2 C1117.2,539.2 1119.5,541.5 1121.7,545.0 C1123.9,548.5 1126.0,554.5 1128.4,558.4 C1130.8,562.3 1133.6,566.2 1136.2,568.5 C1138.8,570.7 1141.5,570.9 1144.1,571.8 C1146.7,572.7 1149.7,572.9 1151.9,574.0 C1154.0,575.2 1154.9,577.3 1156.9,578.8 C1158.8,580.4 1161.4,581.7 1163.7,583.4 C1166.0,585.1 1168.1,587.4 1170.6,589.1 C1173.1,590.9 1176.3,591.6 1178.6,593.7 C1180.9,595.8 1182.2,599.1 1184.3,601.7 C1186.4,604.4 1189.3,608.5 1191.2,609.8 C1193.1,611.0 1193.9,607.4 1195.8,609.1 C1197.7,610.8 1200.4,617.5 1202.7,620.1 C1205.0,622.7 1207.4,623.3 1209.5,624.6 C1211.6,626.0 1213.5,627.4 1215.3,628.1 C1217.0,628.8 1218.1,629.1 1219.8,628.8 C1221.6,628.4 1223.7,627.0 1225.6,625.8 C1227.5,624.5 1229.6,623.5 1231.3,621.2 C1233.0,618.9 1234.3,614.5 1235.9,612.0 C1237.4,609.6 1238.9,607.7 1240.5,606.8 C1242.0,605.8 1243.5,605.4 1245.0,606.3 C1246.6,607.2 1247.5,610.4 1249.6,612.0 C1251.7,613.7 1254.8,614.6 1257.6,615.9 C1260.5,617.3 1263.4,619.4 1266.8,620.1 C1270.2,620.7 1274.4,620.1 1278.2,620.1 C1282.1,620.1 1286.2,620.4 1289.7,620.1 C1293.1,619.8 1295.8,619.2 1298.8,618.2 C1301.9,617.3 1305.3,615.6 1308.0,614.3 C1310.7,613.1 1312.8,612.6 1314.9,610.9 C1317.0,609.2 1318.9,605.7 1320.6,604.0 C1322.3,602.3 1323.5,601.2 1325.2,600.6 C1326.9,600.0 1328.8,600.4 1330.9,600.6 C1333.0,600.8 1335.5,601.9 1337.8,601.7 C1340.1,601.6 1342.4,600.5 1344.6,599.5 C1346.9,598.4 1349.2,596.6 1351.5,595.3 C1353.8,594.1 1356.1,593.0 1358.4,592.1 C1360.7,591.3 1362.6,590.7 1365.3,590.3 C1367.9,589.9 1371.0,589.9 1374.4,589.6 C1377.8,589.3 1382.2,588.5 1385.9,588.5 C1389.5,588.4 1393.3,588.8 1396.2,589.1 C1399.0,589.5 1400.6,591.9 1403.0,590.8 C1405.5,589.6 1408.8,584.3 1411.0,582.3 C1413.3,580.3 1414.7,580.5 1416.8,578.8 C1418.9,577.2 1421.4,573.8 1423.6,572.4 C1425.9,571.1 1428.0,571.3 1430.5,570.8 C1433.0,570.4 1436.0,569.8 1438.5,569.7 C1441.0,569.6 1444.3,570.1 1445.4,570.1" stroke="#4689e0" stroke-width="1.2"/>
<path d="M10.0,383.1 C12.9,384.7 21.6,389.2 27.4,392.7 C33.2,396.2 39.1,400.2 44.9,404.0 C50.7,407.8 56.5,411.7 62.3,415.3 C68.1,418.9 74.0,422.5 79.8,425.8 C85.6,429.1 91.4,432.6 97.2,435.4 C103.0,438.2 108.8,440.2 114.6,442.4 C120.4,444.6 126.3,446.7 132.1,448.5 C137.9,450.3 143.7,451.8 149.5,453.4 C155.3,455.0 161.2,456.6 167.0,458.1 C172.8,459.6 178.6,461.0 184.4,462.4 C190.2,463.8 196.0,465.1 201.8,466.4 C207.6,467.7 213.5,469.2 219.3,470.3 C225.1,471.4 230.9,472.3 236.7,473.2 C242.5,474.1 248.4,474.9 254.2,475.5 C260.0,476.1 265.8,476.5 271.6,476.7 C277.4,476.9 283.2,477.1 289.0,476.9 C294.8,476.7 299.7,476.6 306.5,475.5 C313.3,474.4 321.3,472.9 330.0,470.6 C338.7,468.3 350.1,464.6 358.7,461.5 C367.3,458.4 374.0,455.6 381.6,452.3 C389.2,449.0 396.4,445.4 404.5,441.8 C412.6,438.2 422.0,434.7 430.0,431.0 C438.0,427.3 444.9,423.5 452.3,419.8 C459.8,416.1 467.2,412.1 474.7,408.6 C482.1,405.1 489.6,402.0 497.0,398.6 C504.4,395.2 511.9,391.9 519.4,388.5 C526.9,385.1 534.3,381.7 541.7,378.5 C549.1,375.3 556.5,372.1 564.0,369.5 C571.5,366.9 578.9,364.6 586.4,362.8 C593.9,361.1 601.2,359.9 608.7,359.0 C616.2,358.1 623.7,357.8 631.1,357.7 C638.5,357.6 646.0,357.8 653.4,358.4 C660.8,359.0 668.3,360.0 675.8,361.3 C683.2,362.6 690.7,364.3 698.1,366.2 C705.5,368.1 713.0,370.8 720.4,372.9 C727.8,374.9 735.3,376.9 742.8,378.5 C750.2,380.1 757.6,381.4 765.1,382.3 C772.6,383.2 780.0,383.7 787.5,383.6 C795.0,383.5 802.4,383.0 809.8,381.8 C817.2,380.6 826.4,377.9 832.1,376.2 C837.8,374.4 839.6,373.4 843.9,371.3 C848.2,369.2 853.2,366.6 857.9,363.7 C862.5,360.8 867.1,357.3 871.8,353.9 C876.4,350.5 881.1,347.0 885.8,343.5 C890.4,340.0 895.1,336.6 899.7,333.0 C904.4,329.4 909.1,325.6 913.7,321.8 C918.4,318.0 923.0,313.9 927.6,310.0 C932.2,306.1 937.0,302.1 941.6,298.1 C946.2,294.2 950.0,291.7 955.5,286.3 C961.0,280.9 967.2,272.4 974.8,266.0 C982.4,259.6 992.9,252.6 1001.1,247.9 C1009.3,243.2 1017.5,240.4 1024.1,238.1 C1030.7,235.8 1035.6,234.5 1040.5,233.8 C1045.4,233.1 1048.7,233.1 1053.6,233.8 C1058.5,234.5 1063.5,236.0 1070.1,238.1 C1076.7,240.2 1084.9,243.4 1093.1,246.3 C1101.3,249.2 1110.6,252.2 1119.4,255.5 C1128.2,258.8 1136.9,262.6 1145.7,266.0 C1154.5,269.4 1163.0,271.8 1172.0,275.9 C1181.0,280.0 1191.0,283.6 1200.0,290.7 C1209.0,297.8 1217.5,310.1 1226.3,318.6 C1235.1,327.1 1243.8,334.8 1252.6,341.6 C1261.4,348.5 1271.0,354.9 1278.9,359.7 C1286.8,364.5 1294.2,367.4 1300.0,370.6 C1305.8,373.8 1309.1,376.2 1313.7,379.1 C1318.3,382.0 1322.9,385.0 1327.5,388.0 C1332.1,391.0 1336.6,394.0 1341.2,396.9 C1345.8,399.8 1350.4,402.6 1355.0,405.2 C1359.6,407.8 1364.1,410.3 1368.7,412.7 C1373.3,415.1 1377.8,417.5 1382.4,419.6 C1387.0,421.7 1391.6,423.3 1396.2,425.1 C1400.8,426.9 1405.3,428.9 1409.9,430.6 C1414.5,432.3 1419.1,433.9 1423.7,435.4 C1428.3,436.9 1433.8,438.5 1437.4,439.5 C1441.0,440.5 1444.1,441.2 1445.4,441.6" stroke="#82c885" stroke-width="2.0"/>
<path d="M18.9,297.9 C32.4,296.8 69.8,293.9 100.0,291.5 C130.2,289.1 166.7,286.2 200.0,283.6 C233.3,281.0 263.3,278.6 300.0,275.7 C336.7,272.8 386.7,268.9 420.0,266.2 C453.3,263.5 470.0,262.1 500.0,259.5 C530.0,256.9 566.9,253.0 600.0,250.3 C633.1,247.6 668.6,244.8 698.6,243.2 C728.6,241.6 750.0,242.1 780.0,240.7 C810.0,239.3 845.8,237.3 878.6,234.8 C911.4,232.3 944.1,228.8 977.0,225.9 C1009.9,223.1 1048.6,219.7 1076.0,217.7 C1103.4,215.7 1119.8,214.6 1141.6,213.7 C1163.4,212.8 1185.1,211.9 1207.0,212.0 C1228.9,212.1 1251.0,213.3 1273.0,214.4 C1295.0,215.5 1321.2,217.6 1339.0,218.8 C1356.8,220.0 1362.7,220.2 1380.0,221.6 C1397.3,223.0 1432.5,226.3 1443.0,227.2" stroke="#07715f" stroke-width="4.1"/>
<path d="M1443.0,227.2 L1551.8,251.2" stroke="#07715f" stroke-width="3.8" stroke-dasharray="5.5 7.2" stroke-linecap="butt"/>
<path d="M19.2,324.2 C21.5,325.3 26.8,327.9 32.9,331.0 C39.0,334.1 48.2,338.7 55.8,342.5 C63.4,346.3 71.1,350.2 78.7,354.0 C86.3,357.8 94.0,361.6 101.6,365.2 C109.2,368.8 116.9,372.3 124.5,375.5 C132.1,378.7 139.8,381.7 147.4,384.6 C155.0,387.6 162.7,390.5 170.3,393.2 C177.9,395.9 185.6,398.5 193.2,400.9 C200.8,403.3 208.5,405.6 216.1,407.8 C223.7,410.0 231.4,412.1 239.0,414.1 C246.6,416.1 254.3,417.9 261.9,419.6 C269.5,421.3 277.4,423.0 284.8,424.3 C292.2,425.6 299.0,426.8 306.5,427.6 C314.0,428.5 322.8,429.2 330.0,429.4 C337.2,429.6 341.4,429.1 349.6,428.9 C357.9,428.7 369.5,428.6 379.5,428.2 C389.5,427.8 401.0,427.1 409.4,426.7 C417.8,426.3 422.9,426.8 430.0,426.0 C437.1,425.2 444.9,423.2 452.3,422.0 C459.8,420.8 467.2,419.8 474.7,418.7 C482.1,417.6 489.6,416.3 497.0,415.3 C504.4,414.3 511.9,413.5 519.4,412.6 C526.9,411.7 534.3,410.6 541.7,409.7 C549.1,408.8 556.5,408.4 564.0,407.5 C571.5,406.6 578.9,405.4 586.4,404.6 C593.9,403.9 601.2,403.4 608.7,403.0 C616.2,402.6 623.7,402.0 631.1,401.9 C638.5,401.8 646.0,402.0 653.4,402.4 C660.8,402.8 668.3,403.5 675.8,404.2 C683.2,404.9 690.7,406.0 698.1,406.8 C705.5,407.6 713.0,408.4 720.4,409.1 C727.8,409.8 735.3,410.5 742.8,410.9 C750.2,411.3 757.6,411.3 765.1,411.3 C772.6,411.3 780.0,411.4 787.5,410.9 C795.0,410.4 802.7,409.2 809.8,408.2 C816.9,407.2 824.3,405.9 830.0,404.8 C835.7,403.7 839.2,402.6 843.9,401.3 C848.5,400.0 853.2,398.7 857.9,397.1 C862.5,395.5 867.1,393.6 871.8,391.6 C876.4,389.6 881.1,387.5 885.8,385.3 C890.4,383.1 895.1,380.8 899.7,378.3 C904.4,375.9 909.1,373.2 913.7,370.6 C918.4,368.1 923.0,365.7 927.6,363.0 C932.2,360.3 937.0,357.5 941.6,354.6 C946.2,351.7 950.9,348.5 955.5,345.5 C960.1,342.5 964.8,339.5 969.4,336.5 C974.0,333.5 978.8,330.4 983.4,327.4 C988.0,324.4 992.6,321.2 997.3,318.3 C1001.9,315.4 1006.6,312.6 1011.3,310.0 C1015.9,307.4 1020.4,305.2 1025.2,303.0 C1030.0,300.8 1034.2,299.1 1040.0,296.7 C1045.8,294.3 1054.1,290.6 1059.9,288.8 C1065.7,287.0 1069.8,286.6 1074.8,285.8 C1079.8,285.1 1084.8,284.7 1089.8,284.3 C1094.8,283.9 1099.7,283.7 1104.7,283.5 C1109.7,283.3 1114.6,283.2 1119.6,283.2 C1124.6,283.2 1129.6,283.2 1134.6,283.5 C1139.6,283.8 1144.5,284.1 1149.5,284.7 C1154.5,285.3 1159.4,286.3 1164.4,287.3 C1169.4,288.3 1174.4,289.4 1179.4,290.7 C1184.4,292.0 1185.4,292.5 1194.3,295.2 C1203.2,297.9 1221.0,302.9 1232.9,307.1 C1244.8,311.3 1254.5,315.4 1265.7,320.3 C1276.9,325.2 1292.0,332.9 1300.0,336.5 C1308.0,340.1 1309.1,340.1 1313.7,342.0 C1318.3,343.9 1322.9,346.1 1327.5,348.2 C1332.1,350.2 1336.6,352.2 1341.2,354.3 C1345.8,356.4 1350.4,358.4 1355.0,360.5 C1359.6,362.6 1364.1,364.8 1368.7,366.7 C1373.3,368.6 1377.8,370.5 1382.4,372.2 C1387.0,373.9 1391.6,375.5 1396.2,377.0 C1400.8,378.5 1405.3,379.8 1409.9,381.1 C1414.5,382.4 1419.1,383.6 1423.7,384.6 C1428.3,385.6 1434.3,386.7 1437.4,387.3 C1440.5,387.9 1441.4,387.9 1442.2,388.0" stroke="#2962ff" stroke-width="4.2"/>
<path d="M19.6,461.9 L44.5,482.0 L69.5,494.5 L94.4,498.4 L119.3,494.7 L144.2,486.9 L169.2,478.8 L194.1,472.0 L219.0,464.4 L244.0,454.8 L268.9,442.9 L293.8,427.2 L318.8,405.9 L343.7,383.4 L368.6,360.9 L393.6,341.7 L418.5,327.3 L443.4,313.9 L468.3,302.8 L493.3,294.7 L518.2,290.5 L543.1,292.0 L568.1,296.4 L593.0,311.0 L617.9,329.6 L642.9,353.1 L667.8,378.0 L692.7,406.1 L717.6,433.1 L742.6,453.4 L767.5,457.3 L792.4,449.5 L817.4,427.9 L842.3,383.2 L867.2,338.5 L892.1,287.7 L917.1,233.4 L942.0,183.9 L966.9,152.5 L991.9,124.2 L1016.8,113.1 L1041.7,133.0 L1066.7,180.8 L1091.6,227.4 L1116.5,277.3 L1141.4,324.1 L1166.4,368.6 L1191.3,412.5 L1216.2,462.2 L1241.2,506.7 L1266.1,535.5 L1291.0,547.8 L1316.0,551.8 L1340.9,554.2 L1365.8,549.2 L1390.8,537.5 L1415.7,518.1 L1440.6,486.7" stroke="#f8bbd0" stroke-width="4.2"/>
<path d="M10.5,469.8 C13.1,472.6 20.9,481.6 26.3,486.3 C31.7,491.0 36.1,495.0 42.7,497.8 C49.3,500.6 59.1,502.6 65.7,503.4 C72.3,504.2 76.7,503.9 82.2,502.7 C87.7,501.5 93.1,499.1 98.6,496.1 C104.1,493.1 109.6,488.4 115.1,484.6 C120.6,480.8 126.0,476.9 131.5,473.1 C137.0,469.3 142.4,465.2 147.9,461.6 C153.4,458.1 159.5,454.8 164.4,451.8 C169.3,448.8 173.1,445.9 177.5,443.5 C181.9,441.1 186.3,439.0 190.7,437.6 C195.1,436.2 198.3,436.2 203.8,435.3 C209.3,434.4 218.0,433.4 223.5,432.0 C229.0,430.6 232.3,428.9 236.7,427.1 C241.1,425.3 245.4,422.6 249.8,421.2 C254.2,419.8 259.3,419.0 263.0,418.5 C266.7,418.0 269.3,418.4 272.0,418.2 C274.7,417.9 276.9,417.7 279.4,417.0 C281.9,416.3 284.4,415.2 286.9,414.0 C289.4,412.8 291.9,411.2 294.4,409.5 C296.9,407.8 299.3,405.5 301.8,403.5 C304.3,401.5 306.8,399.5 309.3,397.6 C311.8,395.7 314.3,394.3 316.8,392.3 C319.3,390.3 321.7,388.0 324.2,385.6 C326.7,383.2 329.2,380.6 331.7,378.1 C334.2,375.6 336.7,373.3 339.2,370.7 C341.7,368.1 344.4,365.2 346.6,362.5 C348.8,359.8 350.6,356.8 352.6,354.2 C354.6,351.6 356.6,349.2 358.6,346.8 C360.6,344.4 362.6,342.1 364.6,340.0 C366.6,337.9 368.5,336.0 370.5,334.1 C372.5,332.2 374.5,330.6 376.5,328.8 C378.5,327.1 380.5,325.1 382.5,323.6 C384.5,322.1 386.5,321.0 388.5,319.9 C390.5,318.8 392.4,317.7 394.4,316.9 C396.4,316.1 398.4,315.6 400.4,315.1 C402.4,314.6 403.9,314.3 406.4,313.9 C408.9,313.5 412.4,313.0 415.4,312.7 C418.4,312.4 421.3,312.5 424.3,312.1 C427.3,311.8 430.1,311.3 433.3,310.6 C436.5,309.9 439.9,308.6 443.5,307.7 C447.1,306.8 451.0,306.1 454.7,305.5 C458.4,304.9 462.2,305.1 465.9,304.4 C469.6,303.6 473.3,302.1 477.0,301.0 C480.7,299.9 484.5,298.6 488.2,297.7 C491.9,296.8 496.0,296.2 499.4,295.9 C502.8,295.6 505.3,295.6 508.3,295.9 C511.3,296.2 514.2,296.8 517.2,297.7 C520.2,298.6 523.2,299.9 526.2,301.0 C529.2,302.1 532.1,303.3 535.1,304.4 C538.1,305.5 541.0,306.8 544.0,307.7 C547.0,308.6 550.0,309.1 553.0,310.0 C556.0,310.9 558.9,312.0 561.9,313.3 C564.9,314.6 567.9,315.9 570.9,317.8 C573.9,319.7 576.8,321.7 579.8,324.5 C582.8,327.3 585.7,331.1 588.7,334.5 C591.7,337.9 594.7,341.2 597.7,344.6 C600.7,348.0 603.5,351.4 606.5,355.0 C609.5,358.6 612.4,362.5 615.4,366.2 C618.4,369.9 621.4,373.8 624.4,377.3 C627.4,380.8 630.3,384.6 633.3,387.4 C636.3,390.2 639.2,392.1 642.2,394.1 C645.2,396.2 648.2,397.3 651.2,399.7 C654.2,402.1 657.1,405.2 660.1,408.6 C663.1,412.0 666.1,415.9 669.1,419.8 C672.1,423.7 675.0,428.0 678.0,432.1 C681.0,436.2 683.9,440.5 686.9,444.4 C689.9,448.3 692.9,452.0 695.9,455.5 C698.9,459.0 701.8,462.2 704.8,465.6 C707.8,469.0 710.7,472.6 713.7,475.6 C716.7,478.6 719.7,481.1 722.7,483.5 C725.7,485.9 728.8,488.6 731.6,490.2 C734.4,491.8 736.8,492.6 739.4,493.1 C742.0,493.6 744.5,493.6 747.3,493.1 C750.1,492.6 753.2,491.8 756.2,490.2 C759.2,488.6 762.1,486.3 765.1,483.5 C768.1,480.7 771.1,477.3 774.1,473.4 C777.1,469.5 780.0,464.8 783.0,460.0 C786.0,455.2 788.9,450.0 791.9,444.4 C794.9,438.8 797.9,432.8 800.9,426.5 C803.9,420.2 806.8,413.0 809.8,406.4 C812.8,399.8 815.7,393.2 818.7,386.8 C821.7,380.4 825.8,371.9 827.7,368.0 C829.6,364.1 828.5,367.8 830.0,363.5 C831.5,359.2 834.7,349.8 837.0,342.5 C839.3,335.2 841.6,327.2 843.9,320.0 C846.2,312.8 848.6,305.3 850.9,299.0 C853.2,292.7 855.5,288.0 857.9,282.0 C860.2,276.0 862.6,269.2 865.0,263.0 C867.4,256.8 869.9,250.5 872.0,245.0 C874.1,239.5 875.7,234.3 877.5,230.0 C879.3,225.7 880.8,222.7 882.7,218.9 C884.6,215.1 886.7,211.0 888.7,207.0 C890.7,203.0 892.7,199.0 894.7,195.0 C896.7,191.0 898.7,187.1 900.7,183.1 C902.7,179.1 904.6,175.0 906.6,171.1 C908.6,167.2 910.6,163.6 912.6,159.9 C914.6,156.2 916.6,152.3 918.6,148.7 C920.6,145.1 922.6,141.8 924.6,138.3 C926.6,134.8 928.5,131.2 930.5,127.8 C932.5,124.4 934.5,121.2 936.5,118.1 C938.5,115.0 940.5,112.0 942.5,109.1 C944.5,106.2 946.5,103.4 948.5,100.9 C950.5,98.4 952.4,95.9 954.4,94.2 C956.4,92.5 958.6,91.2 960.4,90.5 C962.1,89.8 963.4,89.7 964.9,89.7 C966.4,89.7 967.6,89.9 969.4,90.5 C971.1,91.1 973.4,92.3 975.4,93.4 C977.4,94.5 979.3,96.0 981.3,97.2 C983.3,98.5 985.3,99.7 987.3,100.9 C989.3,102.1 991.2,103.3 993.3,104.6 C995.4,105.8 998.5,107.1 1000.0,108.4 C1001.5,109.7 1000.8,110.6 1002.4,112.2 C1004.0,113.8 1007.4,116.0 1009.9,118.1 C1012.4,120.2 1014.8,122.3 1017.3,124.8 C1019.8,127.3 1022.5,130.5 1024.8,133.1 C1027.0,135.7 1029.0,138.0 1030.8,140.5 C1032.5,143.0 1033.8,145.2 1035.3,148.0 C1036.8,150.8 1038.4,154.0 1039.8,157.0 C1041.2,160.0 1042.4,162.6 1043.5,165.9 C1044.6,169.2 1045.5,173.8 1046.5,177.0 C1047.5,180.2 1048.2,181.1 1049.4,184.9 C1050.6,188.7 1052.4,194.7 1053.9,199.9 C1055.4,205.1 1056.9,210.8 1058.4,216.3 C1059.9,221.8 1061.4,227.0 1062.9,232.7 C1064.4,238.4 1065.9,245.2 1067.3,250.7 C1068.7,256.2 1069.8,260.1 1071.1,265.6 C1072.3,271.1 1073.5,277.5 1074.8,283.5 C1076.0,289.5 1077.4,295.3 1078.6,301.5 C1079.8,307.7 1081.0,315.6 1082.0,320.5 C1083.0,325.4 1083.8,327.2 1084.9,330.9 C1086.0,334.6 1087.3,339.2 1088.7,342.9 C1090.1,346.6 1091.7,350.2 1093.2,353.3 C1094.7,356.4 1096.1,358.9 1097.6,361.5 C1099.1,364.1 1100.6,366.6 1102.1,369.0 C1103.6,371.4 1105.1,373.6 1106.6,375.7 C1108.1,377.8 1109.6,379.7 1111.1,381.7 C1112.6,383.7 1114.1,385.7 1115.6,387.7 C1117.1,389.7 1118.5,391.5 1120.0,393.7 C1121.5,395.9 1123.0,398.6 1124.5,401.1 C1126.0,403.6 1127.5,406.2 1129.0,408.6 C1130.5,411.0 1132.0,413.2 1133.5,415.3 C1135.0,417.4 1136.4,419.3 1138.0,421.3 C1139.6,423.3 1141.5,425.3 1143.2,427.3 C1144.9,429.3 1146.7,431.2 1148.4,433.2 C1150.2,435.2 1151.8,436.9 1153.7,439.2 C1155.6,441.5 1157.7,444.6 1160.0,447.2 C1162.3,449.8 1165.0,452.1 1167.5,454.6 C1170.0,457.1 1172.4,459.5 1174.9,462.1 C1177.4,464.7 1179.9,467.6 1182.4,470.3 C1184.9,473.1 1187.4,475.7 1189.9,478.6 C1192.4,481.5 1194.8,484.4 1197.3,487.5 C1199.8,490.6 1202.3,493.8 1204.8,497.2 C1207.3,500.6 1209.8,504.2 1212.3,507.7 C1214.8,511.2 1217.3,514.9 1219.8,518.1 C1222.3,521.3 1224.7,524.1 1227.2,527.1 C1229.7,530.1 1232.2,533.4 1234.7,536.1 C1237.2,538.8 1239.7,541.3 1242.2,543.5 C1244.7,545.7 1247.1,547.8 1249.6,549.5 C1252.1,551.2 1254.6,552.8 1257.1,554.0 C1259.6,555.2 1262.4,556.2 1264.6,556.7 C1266.8,557.2 1268.5,557.2 1270.5,557.0 C1272.5,556.8 1274.5,556.1 1276.5,555.2 C1278.5,554.3 1280.5,553.2 1282.5,551.8 C1284.5,550.3 1286.5,548.5 1288.5,546.5 C1290.5,544.5 1292.4,541.8 1294.4,539.8 C1296.4,537.8 1298.4,536.2 1300.4,534.6 C1302.4,533.0 1304.4,531.7 1306.4,530.1 C1308.4,528.5 1310.4,526.6 1312.4,524.9 C1314.4,523.1 1316.4,521.2 1318.4,519.6 C1320.4,518.0 1322.3,516.4 1324.3,515.2 C1326.3,514.0 1328.3,513.1 1330.3,512.2 C1332.3,511.3 1334.2,510.5 1336.3,509.9 C1338.4,509.3 1339.8,509.5 1343.1,508.4 C1346.4,507.3 1351.8,505.6 1356.2,503.3 C1360.6,501.0 1364.9,497.9 1369.2,494.8 C1373.5,491.8 1377.9,488.4 1382.3,485.0 C1386.7,481.6 1391.0,478.2 1395.4,474.5 C1399.8,470.8 1404.1,466.7 1408.5,462.8 C1412.9,458.9 1417.7,454.7 1421.6,451.0 C1425.5,447.3 1428.7,444.1 1432.0,440.5 C1435.3,436.9 1439.0,432.2 1441.2,429.4 C1443.4,426.6 1444.4,424.5 1445.1,423.5" stroke="#4c94f2" stroke-width="2.1"/>
<path d="M1369.9,467.4L1382.3,438.6" stroke="#4c94f2" stroke-width="2.8" stroke-dasharray="0.1 5.1" stroke-linecap="round"/>
<path d="M11.5,485.9V502.7M24.5,474.5V490.5M36.5,486.6V502.7M40.5,479.8V491.2M53.5,474.0V524.4M61.5,472.9V492.4M65.5,477.5V498.1M69.5,475.2V519.8M74.5,446.6V480.9M86.5,421.4V499.2M94.5,427.1V445.4M103.5,435.1V450.0M107.5,424.8V440.8M111.5,404.2V437.4M132.5,436.2V453.4M140.5,458.0V476.3M144.5,423.7V469.5M148.5,428.2V447.7M152.5,392.7V435.1M165.5,424.8V455.7M173.5,432.8V448.8M194.5,455.7V462.1M198.5,445.4V459.1M202.5,441.5V451.1M206.5,431.0V445.4M211.5,429.4V437.4M227.5,425.5V440.1M231.5,412.2V434.6M236.5,395.0V419.1M252.5,387.0V424.8M265.5,429.8V444.3M269.5,422.5V438.5M273.5,424.8V440.1M277.5,403.0V430.5M285.5,363.0V410.6M294.5,369.8V380.6M298.5,360.0V377.9M310.5,364.6V369.4M315.5,357.9V368.2M319.5,336.6V364.8M335.5,338.5V352.7M339.5,308.7V347.2M356.5,320.6V331.6M364.5,328.8V345.3M369.5,324.7V330.5M377.5,327.0V336.6M389.5,331.6V344.2M398.5,337.3V352.2M402.5,306.9V340.8M414.5,333.4V356.8M418.5,332.7V341.9M427.5,323.6V348.8M435.5,325.9V354.0M439.5,304.1V328.8M452.5,295.0V320.6M468.5,301.8V339.6M472.5,280.8V321.3M485.5,281.7V299.5M518.5,332.1V345.8M526.5,324.7V338.5M535.5,322.0V329.8M551.5,328.8V336.2M580.5,394.6V412.2M593.5,400.8V416.8M601.5,390.5V412.2M618.5,411.1V428.2M626.5,397.3V438.5M630.5,390.5V406.5M634.5,373.3V396.2M639.5,372.1V389.8M659.5,422.5V447.7M672.5,467.6V488.2M688.5,455.3V485.0M693.5,469.0V483.2M709.5,474.5V479.8M713.5,474.5V478.2M718.5,469.0V476.8M726.5,471.7V477.5M734.5,460.3V479.8M738.5,453.0V462.6M742.5,408.8V455.7M755.5,405.8V420.2M759.5,365.3V415.6M763.5,361.4V382.4M767.5,360.7V369.8M772.5,352.2V366.4M784.5,377.9V396.6M788.5,357.2V398.0M796.5,358.4V371.0M801.5,356.8V367.6M805.5,306.4V360.0M809.5,287.2V314.7M813.5,274.2V297.5M817.5,263.2V297.5M821.5,246.0V266.6M830.5,262.0V270.5M834.5,233.0V267.3M838.5,209.4V254.0M855.5,220.8V249.9M859.5,178.0V235.7M863.5,144.1V199.1M871.5,179.6V194.0M875.5,169.3V183.0M888.5,186.5V197.9M892.5,176.6V189.5M896.5,133.1V187.6M900.5,101.1V148.2M917.5,151.4V175.7M921.5,133.1V161.3M929.5,129.2V156.7M934.5,108.6V137.7M938.5,91.0V122.4M954.5,129.9V156.7M971.5,181.9V204.8M975.5,189.5V208.7M979.5,160.1V197.9M988.5,137.2V184.9M1004.5,168.2V207.1M1017.5,192.2V214.0M1029.5,192.2V212.4M1054.5,407.6V458.0M1071.5,431.7V470.6M1075.5,413.4V447.7M1079.5,413.4V435.6M1083.5,376.7V435.1M1087.5,355.0V389.8M1092.5,330.9V365.3M1100.5,335.5V360.7M1108.5,335.5V374.4M1112.5,327.0V365.3M1133.5,395.0V465.3M1141.5,380.1V411.1M1150.5,400.3V422.5M1162.5,427.1V458.5M1170.5,419.1V453.9M1179.5,424.8V470.6M1195.5,479.8V509.5M1204.5,539.9V609.8M1208.5,538.8V588.0M1220.5,524.3V547.2M1229.5,524.3V539.9M1237.5,527.3V542.7M1241.5,522.7V534.2M1245.5,521.6V536.5M1254.5,502.1V550.9M1258.5,493.5V519.8M1262.5,475.2V501.5M1270.5,452.3V519.8M1274.5,430.1V460.3M1283.5,423.2V445.4M1303.5,488.9V519.4M1308.5,380.1V509.5M1324.5,493.0V517.0M1332.5,480.8V520.5M1345.5,491.4V519.3M1349.5,454.7V500.5M1357.5,458.6V491.4M1362.5,432.3V468.9M1370.5,443.3V462.5M1374.5,430.0V456.3M1378.5,427.9V444.3M1387.5,440.9V462.9M1391.5,436.8V450.5M1395.5,432.7V446.4M1399.5,420.0V440.2M1403.5,418.9V428.5M1411.5,424.1V434.7M1416.5,423.1V431.0M1424.5,421.7V434.0M1428.5,382.5V423.1M1432.5,369.2V388.0M1441.5,335.1V395.6M1445.5,337.2V361.9" stroke="#2fee40" stroke-width="1" stroke-linecap="butt"/>
<path d="M15.5,487.3V491.2M20.5,487.3V496.9M28.5,478.6V495.8M32.5,489.6V501.5M44.5,479.8V506.1M49.5,498.1V521.0M57.5,463.7V503.8M78.5,447.7V461.4M82.5,445.4V470.6M90.5,436.2V455.7M98.5,421.4V439.7M115.5,403.0V424.8M119.5,411.1V424.8M123.5,411.1V437.4M128.5,432.4V454.6M136.5,436.2V476.3M157.5,392.7V413.4M161.5,384.3V455.7M169.5,423.7V453.4M177.5,436.9V445.4M182.5,439.7V446.6M186.5,439.7V453.9M190.5,452.3V463.0M215.5,431.0V443.1M219.5,424.8V438.5M223.5,435.1V447.7M240.5,400.1V415.6M244.5,405.3V417.9M248.5,413.8V436.9M256.5,387.7V405.3M261.5,393.9V444.3M281.5,397.3V413.4M290.5,368.7V389.3M302.5,359.5V370.5M306.5,368.0V374.4M323.5,317.9V346.5M327.5,332.7V347.6M331.5,340.8V349.9M344.5,309.2V329.3M348.5,317.9V333.9M352.5,324.3V332.7M360.5,322.9V332.7M373.5,321.3V333.9M381.5,320.6V330.5M385.5,328.2V344.2M393.5,322.9V343.0M406.5,328.2V355.6M410.5,344.2V361.8M423.5,336.2V348.8M431.5,325.2V340.8M443.5,303.0V309.8M447.5,299.5V317.4M456.5,296.8V319.7M460.5,312.1V336.6M464.5,316.7V354.0M477.5,284.0V303.7M481.5,292.2V301.4M489.5,281.2V293.8M493.5,285.8V309.8M497.5,298.4V304.6M501.5,299.1V309.8M506.5,300.7V317.9M510.5,312.1V336.2M514.5,321.3V345.8M522.5,331.1V338.0M531.5,324.7V331.6M539.5,322.9V333.4M543.5,325.9V333.9M547.5,330.5V337.3M556.5,328.2V340.3M560.5,330.5V337.3M564.5,331.6V342.6M568.5,333.9V343.0M572.5,336.2V356.8M576.5,354.5V425.0M585.5,383.1V404.9M589.5,396.2V417.9M597.5,397.3V428.2M605.5,387.0V400.8M610.5,387.0V404.2M614.5,393.9V427.1M622.5,405.3V422.5M643.5,378.3V389.3M647.5,382.4V411.1M651.5,400.8V428.2M655.5,409.9V433.3M664.5,423.7V493.5M668.5,469.5V490.5M676.5,470.6V486.6M680.5,469.5V493.5M684.5,467.2V491.2M697.5,467.2V477.5M701.5,468.3V477.5M705.5,474.0V482.7M722.5,467.2V476.8M730.5,471.3V479.8M747.5,409.5V425.5M751.5,417.9V425.5M776.5,360.7V379.7M780.5,376.0V400.8M792.5,353.1V375.6M826.5,256.8V269.6M842.5,211.7V231.1M846.5,219.7V236.9M851.5,226.6V242.1M867.5,171.1V187.6M880.5,175.0V189.5M884.5,175.7V194.0M905.5,121.7V175.0M909.5,152.8V172.7M913.5,148.7V179.6M925.5,137.2V157.9M942.5,106.3V129.9M946.5,116.6V139.1M950.5,125.8V151.4M959.5,116.2V205.9M963.5,184.2V218.5M967.5,180.3V204.1M983.5,156.7V194.5M992.5,148.2V168.2M996.5,155.1V199.5M1000.5,181.2V193.4M1008.5,146.9V216.9M1013.5,199.1V240.3M1021.5,189.9V211.7M1025.5,192.2V213.3M1033.5,175.0V256.3M1037.5,246.0V324.5M1042.5,295.6V636.6M1046.5,386.6V440.8M1050.5,414.5V459.8M1058.5,404.2V428.2M1062.5,412.2V437.4M1067.5,431.0V464.9M1096.5,325.2V355.0M1104.5,336.6V379.0M1116.5,327.0V346.9M1121.5,338.9V387.0M1125.5,378.3V430.5M1129.5,413.4V460.3M1137.5,388.2V420.2M1146.5,379.0V420.9M1154.5,381.3V421.4M1158.5,411.1V453.0M1166.5,425.5V450.0M1175.5,422.5V450.0M1183.5,416.8V499.2M1187.5,479.8V517.5M1191.5,495.8V520.3M1200.5,478.5V565.1M1212.5,517.0V545.6M1216.5,519.8V545.6M1224.5,519.3V543.4M1233.5,523.9V537.2M1249.5,522.7V541.1M1266.5,475.9V496.5M1278.5,423.7V446.6M1287.5,432.4V464.4M1291.5,432.8V452.3M1295.5,448.4V484.3M1299.5,482.0V519.8M1312.5,370.5V430.5M1316.5,419.7V506.7M1320.5,491.4V512.4M1328.5,498.7V538.1M1337.5,489.1V521.6M1341.5,509.0V538.1M1353.5,464.3V483.1M1366.5,455.6V476.9M1382.5,413.2V464.3M1407.5,416.9V432.0M1420.5,417.8V434.0M1436.5,375.0V386.6" stroke="#ffffff" stroke-width="1" stroke-linecap="butt"/>
<path d="M10.0,486.6h3V492.4h-3ZM23.0,480.9h3V490.1h-3ZM35.0,488.9h3V499.2h-3ZM39.0,480.9h3V490.1h-3ZM52.0,475.2h3V517.5h-3ZM60.0,488.9h3V491.2h-3ZM64.0,479.8h3V492.4h-3ZM68.0,477.5h3V479.8h-3ZM73.0,447.7h3V479.8h-3ZM85.0,443.1h3V468.3h-3ZM93.0,432.8h3V444.3h-3ZM102.0,436.2h3V438.5h-3ZM106.0,429.4h3V438.5h-3ZM110.0,411.1h3V430.5h-3ZM131.0,443.1h3V452.3h-3ZM139.0,466.0h3V474.0h-3ZM143.0,446.6h3V468.3h-3ZM147.0,431.7h3V446.6h-3ZM151.0,393.4h3V432.8h-3ZM164.0,425.5h3V447.7h-3ZM172.0,436.2h3V447.7h-3ZM193.0,456.9h3V461.4h-3ZM197.0,446.6h3V458.5h-3ZM201.0,444.3h3V447.7h-3ZM205.0,431.7h3V444.7h-3ZM210.0,432.1h3V433.1h-3ZM226.0,431.7h3V439.7h-3ZM230.0,414.5h3V434.0h-3ZM235.0,400.8h3V415.6h-3ZM251.0,393.4h3V423.7h-3ZM264.0,430.5h3V443.1h-3ZM268.0,427.1h3V432.8h-3ZM272.0,425.5h3V427.3h-3ZM276.0,404.2h3V428.2h-3ZM284.0,373.3h3V409.9h-3ZM293.0,372.1h3V380.1h-3ZM297.0,360.7h3V372.8h-3ZM309.0,365.3h3V368.7h-3ZM314.0,359.5h3V367.1h-3ZM318.0,337.3h3V363.7h-3ZM334.0,344.9h3V349.5h-3ZM338.0,309.8h3V346.5h-3ZM355.0,324.7h3V331.1h-3ZM363.0,329.8h3V330.8h-3ZM368.0,326.6h3V329.8h-3ZM376.0,329.3h3V333.4h-3ZM388.0,333.9h3V343.5h-3ZM397.0,338.0h3V341.9h-3ZM401.0,329.3h3V338.5h-3ZM413.0,343.5h3V352.2h-3ZM417.0,338.9h3V341.2h-3ZM426.0,329.3h3V340.8h-3ZM434.0,327.0h3V340.8h-3ZM438.0,306.4h3V328.2h-3ZM451.0,297.7h3V314.4h-3ZM467.0,303.0h3V333.9h-3ZM471.0,286.9h3V314.4h-3ZM484.0,288.1h3V299.1h-3ZM517.0,333.4h3V345.3h-3ZM525.0,325.2h3V337.3h-3ZM534.0,324.7h3V327.5h-3ZM550.0,329.3h3V332.7h-3ZM579.0,395.7h3V404.9h-3ZM592.0,401.9h3V415.6h-3ZM600.0,391.1h3V408.8h-3ZM617.0,416.3h3V421.4h-3ZM625.0,403.0h3V421.4h-3ZM629.0,392.7h3V403.5h-3ZM633.0,385.2h3V393.9h-3ZM638.0,382.9h3V386.6h-3ZM658.0,424.8h3V432.4h-3ZM671.0,471.7h3V485.9h-3ZM687.0,480.9h3V484.3h-3ZM692.0,469.9h3V482.0h-3ZM708.0,475.9h3V478.6h-3ZM712.0,475.4h3V476.4h-3ZM717.0,469.9h3V476.3h-3ZM725.0,472.9h3V475.9h-3ZM733.0,461.4h3V475.2h-3ZM737.0,453.9h3V461.4h-3ZM741.0,411.7h3V454.6h-3ZM754.0,414.0h3V419.5h-3ZM758.0,375.1h3V414.5h-3ZM762.0,364.1h3V376.7h-3ZM766.0,361.8h3V364.6h-3ZM771.0,361.4h3V363.0h-3ZM783.0,391.1h3V393.4h-3ZM787.0,361.8h3V391.6h-3ZM795.0,365.9h3V369.8h-3ZM800.0,357.7h3V366.9h-3ZM804.0,307.3h3V359.1h-3ZM808.0,291.8h3V307.8h-3ZM812.0,287.2h3V294.1h-3ZM816.0,265.0h3V287.2h-3ZM820.0,262.0h3V265.9h-3ZM829.0,263.2h3V268.9h-3ZM833.0,233.9h3V266.6h-3ZM837.0,214.0h3V235.7h-3ZM854.0,224.7h3V241.4h-3ZM858.0,180.3h3V225.4h-3ZM862.0,172.1h3V181.9h-3ZM870.0,180.8h3V182.1h-3ZM874.0,179.6h3V182.6h-3ZM887.0,187.6h3V192.2h-3ZM891.0,178.0h3V188.8h-3ZM895.0,146.9h3V178.5h-3ZM899.0,125.3h3V147.6h-3ZM916.0,152.8h3V173.9h-3ZM920.0,145.3h3V153.3h-3ZM928.0,136.1h3V155.6h-3ZM933.0,119.4h3V136.8h-3ZM937.0,109.3h3V120.1h-3ZM953.0,130.8h3V149.8h-3ZM970.0,201.4h3V203.2h-3ZM974.0,196.3h3V203.2h-3ZM978.0,166.6h3V197.2h-3ZM987.0,153.7h3V183.5h-3ZM1003.0,171.1h3V190.4h-3ZM1016.0,195.6h3V212.4h-3ZM1028.0,197.2h3V211.7h-3ZM1053.0,409.5h3V453.9h-3ZM1070.0,445.4h3V448.8h-3ZM1074.0,427.1h3V446.6h-3ZM1078.0,419.5h3V428.2h-3ZM1082.0,388.2h3V420.9h-3ZM1086.0,361.8h3V388.8h-3ZM1091.0,348.1h3V363.0h-3ZM1099.0,337.8h3V351.5h-3ZM1107.0,363.0h3V366.9h-3ZM1111.0,328.6h3V364.1h-3ZM1132.0,396.2h3V432.4h-3ZM1140.0,392.1h3V402.6h-3ZM1149.0,403.0h3V417.2h-3ZM1161.0,432.8h3V444.7h-3ZM1169.0,431.7h3V445.4h-3ZM1178.0,430.1h3V448.8h-3ZM1194.0,480.9h3V504.3h-3ZM1203.0,561.0h3V562.8h-3ZM1207.0,539.9h3V561.7h-3ZM1219.0,528.5h3V544.5h-3ZM1228.0,525.7h3V539.5h-3ZM1236.0,528.5h3V532.6h-3ZM1240.0,527.3h3V529.6h-3ZM1244.0,523.4h3V528.0h-3ZM1253.0,512.9h3V535.8h-3ZM1257.0,496.9h3V514.1h-3ZM1261.0,487.3h3V497.4h-3ZM1269.0,458.0h3V494.6h-3ZM1273.0,435.6h3V459.1h-3ZM1282.0,436.2h3V439.7h-3ZM1302.0,494.2h3V506.1h-3ZM1307.0,382.9h3V494.2h-3ZM1323.0,499.8h3V503.7h-3ZM1331.0,497.6h3V519.3h-3ZM1344.0,498.7h3V518.2h-3ZM1348.0,479.2h3V499.2h-3ZM1356.0,465.5h3V480.4h-3ZM1361.0,457.0h3V465.5h-3ZM1369.0,451.8h3V460.9h-3ZM1373.0,438.0h3V452.4h-3ZM1377.0,436.8h3V438.4h-3ZM1386.0,447.8h3V458.8h-3ZM1390.0,439.3h3V448.5h-3ZM1394.0,438.2h3V440.2h-3ZM1398.0,425.1h3V439.5h-3ZM1402.0,424.4h3V425.5h-3ZM1410.0,425.1h3V430.6h-3ZM1415.0,423.7h3V425.5h-3ZM1423.0,422.4h3V433.4h-3ZM1427.0,387.1h3V422.8h-3ZM1431.0,377.4h3V387.3h-3ZM1440.0,358.2h3V380.7h-3ZM1444.0,348.6h3V358.5h-3Z" fill="#2fee40" stroke="none"/>
<path d="M14.0,487.8h3V489.6h-3ZM19.0,487.8h3V490.1h-3ZM27.0,479.8h3V491.2h-3ZM31.0,491.2h3V500.4h-3ZM43.0,486.6h3V502.7h-3ZM48.0,501.5h3V516.4h-3ZM56.0,475.2h3V491.2h-3ZM77.0,453.9h3V458.0h-3ZM81.0,455.7h3V469.5h-3ZM89.0,442.0h3V444.3h-3ZM97.0,432.4h3V438.5h-3ZM114.0,409.9h3V412.2h-3ZM118.0,412.2h3V423.7h-3ZM122.0,422.5h3V436.2h-3ZM127.0,436.2h3V452.3h-3ZM135.0,443.1h3V474.0h-3ZM156.0,393.4h3V408.8h-3ZM160.0,407.6h3V447.7h-3ZM168.0,425.5h3V446.6h-3ZM176.0,437.4h3V443.8h-3ZM181.0,443.1h3V445.4h-3ZM185.0,443.8h3V453.4h-3ZM189.0,453.0h3V461.4h-3ZM214.0,431.7h3V434.0h-3ZM218.0,432.8h3V437.4h-3ZM222.0,436.2h3V439.7h-3ZM239.0,400.8h3V414.5h-3ZM243.0,412.2h3V413.8h-3ZM247.0,414.5h3V422.5h-3ZM255.0,393.4h3V404.9h-3ZM260.0,404.9h3V443.1h-3ZM280.0,404.2h3V411.1h-3ZM289.0,373.3h3V380.1h-3ZM301.0,360.7h3V369.8h-3ZM305.0,368.7h3V371.0h-3ZM322.0,337.3h3V343.0h-3ZM326.0,342.6h3V346.5h-3ZM330.0,345.3h3V349.5h-3ZM343.0,309.8h3V325.9h-3ZM347.0,324.3h3V325.9h-3ZM351.0,325.2h3V331.6h-3ZM359.0,324.7h3V331.6h-3ZM372.0,326.6h3V332.7h-3ZM380.0,328.8h3V329.8h-3ZM384.0,329.3h3V343.5h-3ZM392.0,333.9h3V341.9h-3ZM405.0,329.3h3V347.2h-3ZM409.0,345.8h3V352.7h-3ZM422.0,338.9h3V341.9h-3ZM430.0,329.3h3V340.3h-3ZM442.0,305.9h3V307.6h-3ZM446.0,305.9h3V316.7h-3ZM455.0,297.7h3V317.9h-3ZM459.0,317.9h3V328.2h-3ZM463.0,327.0h3V333.9h-3ZM476.0,287.6h3V300.0h-3ZM480.0,297.2h3V300.0h-3ZM488.0,287.6h3V292.7h-3ZM492.0,291.5h3V300.7h-3ZM496.0,300.0h3V303.7h-3ZM500.0,301.8h3V305.3h-3ZM505.0,303.7h3V316.7h-3ZM509.0,316.0h3V328.2h-3ZM513.0,327.0h3V345.3h-3ZM521.0,333.4h3V337.3h-3ZM530.0,325.2h3V328.2h-3ZM538.0,324.3h3V332.7h-3ZM542.0,331.6h3V333.0h-3ZM546.0,331.6h3V332.7h-3ZM555.0,329.3h3V335.0h-3ZM559.0,334.3h3V336.2h-3ZM563.0,335.0h3V336.2h-3ZM567.0,335.7h3V338.0h-3ZM571.0,337.3h3V355.6h-3ZM575.0,355.6h3V404.9h-3ZM584.0,396.2h3V398.0h-3ZM588.0,397.3h3V415.6h-3ZM596.0,400.8h3V408.8h-3ZM604.0,391.1h3V394.3h-3ZM609.0,393.9h3V396.6h-3ZM613.0,396.2h3V421.4h-3ZM621.0,416.3h3V421.4h-3ZM642.0,382.9h3V387.0h-3ZM646.0,385.9h3V403.0h-3ZM650.0,402.6h3V422.5h-3ZM654.0,422.5h3V432.4h-3ZM663.0,424.8h3V476.3h-3ZM667.0,475.9h3V485.5h-3ZM675.0,472.2h3V479.1h-3ZM679.0,478.6h3V482.0h-3ZM683.0,481.4h3V483.2h-3ZM696.0,469.9h3V472.9h-3ZM700.0,471.7h3V475.9h-3ZM704.0,475.2h3V478.6h-3ZM721.0,469.9h3V475.9h-3ZM729.0,472.9h3V475.2h-3ZM746.0,411.7h3V419.5h-3ZM750.0,418.6h3V420.2h-3ZM775.0,361.8h3V377.9h-3ZM779.0,377.4h3V392.7h-3ZM791.0,361.8h3V369.8h-3ZM825.0,262.0h3V268.9h-3ZM841.0,214.0h3V220.8h-3ZM845.0,220.8h3V228.8h-3ZM850.0,227.7h3V241.4h-3ZM866.0,172.1h3V181.9h-3ZM879.0,179.6h3V188.8h-3ZM883.0,188.1h3V192.7h-3ZM904.0,125.3h3V170.5h-3ZM908.0,153.7h3V170.5h-3ZM912.0,169.3h3V173.4h-3ZM924.0,145.9h3V155.6h-3ZM941.0,109.3h3V125.3h-3ZM945.0,125.3h3V134.5h-3ZM949.0,133.8h3V149.8h-3ZM958.0,130.8h3V190.4h-3ZM962.0,189.9h3V195.0h-3ZM966.0,194.5h3V203.2h-3ZM982.0,166.6h3V183.5h-3ZM991.0,153.7h3V157.4h-3ZM995.0,157.4h3V187.2h-3ZM999.0,186.5h3V190.4h-3ZM1007.0,171.1h3V208.2h-3ZM1012.0,207.1h3V211.7h-3ZM1020.0,195.6h3V210.5h-3ZM1024.0,209.4h3V211.7h-3ZM1032.0,197.2h3V255.9h-3ZM1036.0,254.7h3V310.8h-3ZM1041.0,310.8h3V400.3h-3ZM1045.0,398.9h3V419.1h-3ZM1049.0,415.6h3V453.4h-3ZM1057.0,409.5h3V421.4h-3ZM1061.0,420.2h3V435.1h-3ZM1066.0,434.6h3V448.8h-3ZM1095.0,348.1h3V351.5h-3ZM1103.0,337.8h3V366.4h-3ZM1115.0,328.6h3V344.7h-3ZM1120.0,344.7h3V382.9h-3ZM1124.0,382.0h3V423.7h-3ZM1128.0,423.7h3V432.4h-3ZM1136.0,396.2h3V402.6h-3ZM1145.0,392.1h3V416.8h-3ZM1153.0,403.0h3V419.1h-3ZM1157.0,418.6h3V444.7h-3ZM1165.0,432.8h3V444.7h-3ZM1174.0,431.7h3V449.3h-3ZM1182.0,430.1h3V495.8h-3ZM1186.0,495.1h3V503.8h-3ZM1190.0,501.5h3V503.3h-3ZM1199.0,480.8h3V562.8h-3ZM1211.0,535.8h3V544.5h-3ZM1215.0,542.7h3V544.0h-3ZM1223.0,528.5h3V539.5h-3ZM1232.0,525.7h3V532.6h-3ZM1248.0,523.4h3V538.1h-3ZM1265.0,487.3h3V493.5h-3ZM1277.0,435.6h3V439.7h-3ZM1286.0,436.9h3V443.8h-3ZM1290.0,443.1h3V451.1h-3ZM1294.0,449.3h3V483.2h-3ZM1298.0,482.7h3V506.1h-3ZM1311.0,382.9h3V421.4h-3ZM1315.0,421.3h3V501.4h-3ZM1319.0,501.0h3V503.7h-3ZM1327.0,499.8h3V518.8h-3ZM1336.0,497.6h3V511.3h-3ZM1340.0,510.6h3V517.5h-3ZM1352.0,478.5h3V480.8h-3ZM1365.0,457.0h3V460.9h-3ZM1381.0,437.5h3V458.8h-3ZM1406.0,425.1h3V431.0h-3ZM1419.0,423.7h3V433.4h-3ZM1435.0,377.0h3V380.7h-3Z" fill="#ffffff" stroke="none"/>
<path d="M10.0,514.1 C11.0,514.3 13.8,515.6 15.7,515.3 C17.6,514.9 19.4,513.5 21.4,511.8 C23.5,510.1 26.0,507.2 28.3,504.9 C30.6,502.7 32.9,499.7 35.2,498.1 C37.5,496.4 39.8,495.4 42.1,495.1 C44.3,494.8 46.6,496.1 48.9,496.2 C51.2,496.4 53.5,496.2 55.8,495.8 C58.1,495.3 60.4,494.6 62.7,493.5 C65.0,492.4 67.2,491.2 69.5,488.9 C71.8,486.6 74.1,483.2 76.4,479.8 C78.7,476.3 81.0,472.3 83.3,468.3 C85.6,464.3 87.9,459.9 90.1,455.7 C92.4,451.5 94.7,446.7 97.0,443.1 C99.3,439.5 101.6,437.4 103.9,434.0 C106.2,430.5 108.7,425.8 110.8,422.5 C112.9,419.3 114.8,416.3 116.5,414.5 C118.2,412.7 119.5,411.9 121.1,411.7 C122.6,411.6 124.1,412.1 125.6,413.4 C127.2,414.6 128.7,416.4 130.2,419.1 C131.7,421.7 133.3,425.9 134.8,429.4 C136.3,432.8 137.9,436.6 139.4,439.7 C140.9,442.7 142.4,446.0 144.0,447.7 C145.5,449.4 147.0,450.2 148.5,450.0 C150.1,449.8 151.4,448.3 153.1,446.6 C154.8,444.8 156.7,442.0 158.8,439.7 C160.9,437.4 163.4,434.3 165.7,432.8 C168.0,431.3 170.3,430.7 172.6,430.5 C174.9,430.3 177.4,430.7 179.5,431.7 C181.6,432.6 183.3,434.2 185.2,436.2 C187.1,438.3 189.0,441.8 190.9,444.3 C192.8,446.7 194.9,449.5 196.6,451.1 C198.3,452.7 199.5,453.6 201.2,453.9 C202.9,454.2 204.8,453.8 206.9,453.0 C209.0,452.1 211.5,450.7 213.8,448.8 C216.1,447.0 218.4,444.3 220.7,442.0 C223.0,439.7 225.3,438.0 227.5,435.1 C229.8,432.2 232.1,428.0 234.4,424.8 C236.7,421.6 239.0,418.1 241.3,415.6 C243.6,413.2 245.9,411.6 248.1,409.9 C250.4,408.2 253.1,406.2 255.0,405.3 C256.9,404.5 258.1,404.5 259.6,404.9 C261.1,405.3 262.7,406.2 264.2,407.6 C265.7,409.0 267.2,411.6 268.8,413.4 C270.3,415.1 271.8,417.0 273.3,417.9 C274.9,418.9 276.4,419.5 277.9,419.1 C279.4,418.7 280.8,417.5 282.5,415.6 C284.2,413.7 286.3,411.3 288.2,407.6 C290.1,404.0 292.0,398.8 293.9,393.9 C295.9,388.9 297.8,382.6 299.7,377.9 C301.6,373.1 303.7,368.1 305.4,365.3 C307.1,362.4 308.5,361.7 310.0,360.7 C311.4,359.7 312.6,360.9 314.0,359.1 C315.5,357.3 316.9,353.0 318.6,349.9 C320.3,346.9 322.4,342.9 324.3,340.8 C326.3,338.7 328.2,338.3 330.1,337.3 C332.0,336.4 334.1,336.2 335.8,335.0 C337.5,333.9 338.7,332.4 340.4,330.5 C342.1,328.5 344.2,325.4 346.1,323.6 C348.0,321.8 349.7,320.6 351.8,319.7 C353.9,318.8 356.4,318.4 358.7,318.3 C361.0,318.2 363.3,318.5 365.6,319.0 C367.9,319.5 370.1,320.3 372.4,321.3 C374.7,322.2 377.0,323.4 379.3,324.7 C381.6,326.1 383.9,327.8 386.2,329.3 C388.5,330.8 390.8,332.6 393.0,333.9 C395.3,335.2 397.6,336.4 399.9,337.3 C402.2,338.3 404.5,338.7 406.8,339.6 C409.1,340.5 411.4,341.8 413.7,342.6 C415.9,343.4 418.2,344.0 420.5,344.2 C422.8,344.3 425.1,344.3 427.4,343.5 C429.7,342.7 432.2,341.6 434.3,339.6 C436.4,337.6 438.1,334.5 440.0,331.6 C441.9,328.7 443.8,325.3 445.7,322.4 C447.6,319.6 449.5,316.5 451.4,314.4 C453.3,312.3 455.3,310.8 457.2,309.8 C459.1,308.9 461.0,308.5 462.9,308.7 C464.8,308.9 466.9,311.2 468.6,311.0 C470.3,310.8 471.3,309.1 473.2,307.6 C475.1,306.0 477.8,303.6 480.1,301.8 C482.4,300.0 484.6,298.1 486.9,296.8 C489.2,295.5 491.7,294.4 493.8,293.8 C495.9,293.2 497.6,292.9 499.5,293.1 C501.4,293.3 503.5,293.8 505.3,295.0 C507.0,296.1 508.1,297.3 509.8,300.0 C511.5,302.7 513.6,307.4 515.6,311.0 C517.5,314.5 519.4,318.0 521.3,321.3 C523.2,324.5 525.1,328.2 527.0,330.5 C528.9,332.7 530.6,333.9 532.7,335.0 C534.8,336.2 537.3,336.8 539.6,337.3 C541.9,337.8 544.2,338.2 546.5,338.0 C548.8,337.8 551.0,336.7 553.3,336.2 C555.6,335.7 557.9,335.1 560.2,335.0 C562.5,335.0 565.0,334.8 567.1,335.7 C569.2,336.7 571.1,338.0 572.8,340.8 C574.5,343.5 575.9,348.0 577.4,352.2 C578.9,356.4 580.4,361.4 582.0,365.9 C583.5,370.5 585.2,375.9 586.5,379.7 C587.9,383.5 588.9,384.4 590.0,388.8 C591.0,393.3 591.6,402.4 592.9,406.5 C594.1,410.6 595.8,411.6 597.5,413.4 C599.2,415.1 601.1,416.0 603.2,416.8 C605.3,417.5 607.8,417.4 610.1,417.9 C612.4,418.5 614.7,419.5 616.9,420.2 C619.2,421.0 621.7,422.7 623.8,422.5 C625.9,422.3 627.6,421.0 629.5,419.1 C631.4,417.2 633.4,413.9 635.3,411.1 C637.2,408.2 639.1,404.2 641.0,401.9 C642.9,399.6 645.0,398.1 646.7,397.3 C648.4,396.6 649.6,396.4 651.3,397.3 C653.0,398.3 655.3,400.6 657.0,403.0 C658.7,405.5 660.1,408.0 661.6,412.2 C663.1,416.4 664.6,422.5 666.2,428.2 C667.7,434.0 669.2,440.4 670.8,446.6 C672.3,452.7 673.8,459.1 675.3,464.9 C676.9,470.6 678.4,476.5 679.9,480.9 C681.4,485.3 683.0,488.7 684.5,491.2 C686.0,493.7 687.4,494.6 689.1,495.8 C690.8,496.9 692.9,497.9 694.8,498.1 C696.7,498.3 698.4,497.9 700.5,496.9 C702.6,496.0 705.1,494.1 707.4,492.4 C709.7,490.6 712.0,488.5 714.3,486.6 C716.6,484.7 718.8,482.6 721.1,480.9 C723.4,479.2 725.9,477.7 728.0,476.3 C730.1,475.0 731.8,474.2 733.7,472.9 C735.6,471.6 737.7,470.8 739.5,468.3 C741.2,465.8 742.3,462.8 744.0,458.0 C745.7,453.2 747.8,445.8 749.8,439.7 C751.7,433.6 753.6,427.9 755.5,421.4 C757.4,414.9 759.3,407.6 761.2,400.8 C763.1,393.9 765.0,386.4 766.9,380.1 C768.8,373.8 770.9,367.0 772.7,363.0 C774.4,359.0 775.7,357.4 777.2,356.1 C778.8,354.8 779.7,355.0 781.8,355.0 C783.9,355.0 787.0,355.9 789.8,356.1 C792.7,356.3 796.7,356.5 799.0,356.1 C801.3,355.7 802.0,355.7 803.6,353.8 C805.1,351.9 806.6,349.0 808.1,344.7 C809.7,340.3 811.4,332.6 812.7,327.5 C814.1,322.3 815.0,318.3 816.2,313.7 C817.3,309.2 818.2,306.1 819.6,300.0 C821.0,293.9 822.8,283.4 824.3,276.9 C825.9,270.4 827.4,266.6 828.9,260.9 C830.5,255.2 832.0,248.3 833.5,242.6 C835.0,236.9 836.6,231.3 838.1,226.6 C839.6,221.8 841.1,217.0 842.7,214.0 C844.2,210.9 845.7,209.6 847.2,208.2 C848.8,206.8 850.3,206.4 851.8,205.5 C853.4,204.5 854.9,204.3 856.4,202.5 C857.9,200.7 859.5,197.5 861.0,194.5 C862.5,191.4 864.0,187.4 865.6,184.2 C867.1,180.9 868.6,177.3 870.1,175.0 C871.7,172.7 873.2,171.5 874.7,170.5 C876.3,169.4 877.4,169.2 879.3,168.8 C881.2,168.5 883.9,168.4 886.2,168.2 C888.5,167.9 891.1,168.2 893.0,167.5 C895.0,166.7 896.1,165.6 897.6,163.6 C899.2,161.6 900.7,157.7 902.2,155.6 C903.7,153.5 904.9,152.1 906.8,151.0 C908.7,149.8 911.4,149.3 913.7,148.7 C915.9,148.1 918.2,148.3 920.5,147.6 C922.8,146.8 925.1,145.8 927.4,144.1 C929.7,142.4 932.2,139.7 934.3,137.2 C936.4,134.8 938.3,131.3 940.0,129.2 C941.7,127.1 943.0,125.7 944.6,124.7 C946.1,123.6 947.6,123.2 949.1,123.1 C950.7,122.9 952.2,122.5 953.7,123.5 C955.3,124.5 956.8,126.2 958.3,129.2 C959.8,132.3 961.4,137.1 962.9,141.8 C964.4,146.6 965.9,152.1 967.5,157.9 C969.0,163.6 970.5,170.8 972.0,176.2 C973.6,181.5 975.1,186.5 976.6,189.9 C978.2,193.4 979.7,195.6 981.2,196.8 C982.7,198.0 984.1,197.8 985.8,197.2 C987.5,196.7 989.6,195.0 991.5,193.4 C993.4,191.7 995.3,189.2 997.2,187.6 C999.1,186.1 1001.1,184.6 1003.0,184.2 C1004.9,183.7 1006.8,184.1 1008.7,184.9 C1010.6,185.6 1012.5,187.4 1014.4,188.8 C1016.3,190.2 1018.2,191.6 1020.1,193.4 C1022.0,195.1 1024.1,197.0 1025.9,199.1 C1027.6,201.2 1029.1,202.9 1030.4,205.9 C1031.8,209.0 1032.7,212.4 1033.9,217.4 C1035.0,222.4 1036.2,228.8 1037.3,235.7 C1038.5,242.6 1039.6,250.2 1040.7,258.6 C1041.9,267.0 1043.2,277.5 1044.2,286.1 C1045.1,294.6 1045.7,303.0 1046.5,309.9 C1047.2,316.8 1047.7,319.2 1048.6,327.5 C1049.6,335.8 1050.7,348.1 1052.1,359.5 C1053.4,371.0 1055.1,384.7 1056.6,396.2 C1058.2,407.6 1059.7,418.3 1061.2,428.2 C1062.7,438.2 1064.3,447.7 1065.8,455.7 C1067.3,463.7 1068.9,470.8 1070.4,476.3 C1071.9,481.9 1073.6,486.7 1075.0,488.9 C1076.3,491.1 1077.1,490.9 1078.4,489.6 C1079.7,488.3 1081.4,485.8 1083.0,480.9 C1084.5,476.0 1086.0,468.3 1087.6,460.3 C1089.1,452.3 1090.6,442.4 1092.1,432.8 C1093.7,423.3 1095.2,412.6 1096.7,403.0 C1098.2,393.5 1099.8,383.6 1101.3,375.6 C1102.8,367.6 1104.3,360.7 1105.9,355.0 C1107.4,349.2 1108.9,344.7 1110.5,341.2 C1112.0,337.8 1113.5,335.7 1115.0,334.3 C1116.6,333.0 1118.1,332.2 1119.6,333.2 C1121.1,334.2 1122.7,336.4 1124.2,340.1 C1125.7,343.7 1127.2,349.4 1128.8,355.0 C1130.3,360.5 1131.8,367.6 1133.4,373.3 C1134.9,379.0 1136.2,384.3 1137.9,389.3 C1139.6,394.3 1141.7,398.8 1143.7,403.0 C1145.6,407.2 1147.5,410.9 1149.4,414.5 C1151.3,418.1 1153.2,421.7 1155.1,424.8 C1157.0,427.9 1158.9,430.5 1160.8,432.8 C1162.7,435.1 1164.6,436.8 1166.6,438.5 C1168.5,440.3 1170.4,441.8 1172.3,443.1 C1174.2,444.5 1176.3,444.8 1178.0,446.6 C1179.7,448.3 1181.1,449.6 1182.6,453.4 C1184.1,457.2 1185.6,464.9 1187.2,469.5 C1188.7,474.0 1190.2,477.5 1191.7,480.9 C1193.3,484.3 1194.8,485.9 1196.3,490.1 C1197.8,494.3 1199.6,501.1 1200.9,506.1 C1202.2,511.1 1203.4,515.9 1204.3,519.8 C1205.3,523.8 1206.0,525.8 1206.6,529.9 C1207.3,534.0 1207.1,540.0 1208.4,544.5 C1209.6,549.0 1212.4,554.1 1214.1,557.1 C1215.8,560.1 1217.2,561.2 1218.7,562.4 C1220.2,563.5 1221.6,564.1 1223.3,564.0 C1225.0,563.8 1226.9,563.2 1229.0,561.7 C1231.1,560.1 1233.6,557.5 1235.9,554.8 C1238.2,552.1 1240.5,548.7 1242.7,545.6 C1245.0,542.6 1247.3,540.1 1249.6,536.5 C1251.9,532.9 1254.2,528.7 1256.5,523.9 C1258.8,519.1 1261.3,513.6 1263.4,507.9 C1265.4,502.1 1267.2,496.2 1269.1,489.5 C1271.0,482.9 1272.9,474.5 1274.8,467.8 C1276.7,461.1 1278.6,454.6 1280.5,449.5 C1282.4,444.3 1284.5,439.9 1286.2,436.9 C1288.0,433.8 1289.5,432.1 1290.8,431.1 C1292.2,430.2 1293.1,430.0 1294.3,431.1 C1295.4,432.3 1296.6,435.3 1297.7,438.0 C1298.8,440.7 1299.8,445.5 1301.1,447.2 C1302.5,448.9 1304.0,448.9 1305.7,448.3 C1307.4,447.7 1309.7,443.9 1311.4,443.7 C1313.2,443.5 1314.5,444.9 1316.0,447.2 C1317.5,449.5 1319.1,453.5 1320.6,457.5 C1322.1,461.5 1323.5,466.3 1325.2,471.2 C1326.9,476.2 1329.0,482.3 1330.9,487.2 C1332.8,492.2 1334.7,497.2 1336.6,501.0 C1338.5,504.8 1340.4,507.9 1342.4,510.1 C1344.3,512.4 1346.4,514.2 1348.1,514.7 C1349.8,515.3 1351.1,514.9 1352.7,513.6 C1354.2,512.2 1355.5,510.0 1357.2,506.7 C1359.0,503.5 1361.1,499.1 1363.0,494.1 C1364.9,489.2 1366.8,482.3 1368.7,476.9 C1370.6,471.6 1372.5,466.6 1374.4,462.1 C1376.3,457.5 1378.2,452.9 1380.1,449.5 C1382.0,446.0 1383.8,443.7 1385.9,441.4 C1388.0,439.2 1390.4,437.4 1392.7,435.7 C1395.0,434.0 1397.9,432.8 1399.6,431.1 C1401.3,429.5 1401.3,427.1 1403.1,425.8 C1404.8,424.4 1407.6,423.7 1409.9,423.1 C1412.2,422.4 1414.5,422.0 1416.8,421.7 C1419.1,421.3 1421.8,421.9 1423.7,421.0 C1425.5,420.1 1426.4,418.6 1427.8,416.2 C1429.2,413.8 1430.5,409.8 1431.9,406.6 C1433.3,403.4 1434.7,400.4 1436.0,396.9 C1437.4,393.5 1439.0,388.9 1440.1,386.0 C1441.3,383.0 1442.0,380.9 1442.9,379.1 C1443.8,377.3 1445.0,375.6 1445.4,375.0" stroke="#c068ce" stroke-width="2.2"/>
<line x1="11" y1="96.5" x2="1733" y2="96.5" stroke="#ffe93a" stroke-width="1.25"/>
<line x1="11" y1="334.5" x2="1733" y2="334.5" stroke="#ffe93a" stroke-width="1.25"/>
<line x1="11" y1="423.5" x2="1733" y2="423.5" stroke="#ffe93a" stroke-width="1.25"/>
<line x1="11" y1="539.5" x2="1733" y2="539.5" stroke="#ffe93a" stroke-width="1.25"/>
<line x1="11" y1="611.5" x2="1733" y2="611.5" stroke="#ffe93a" stroke-width="1.25"/>
<line x1="11" y1="636.5" x2="1733" y2="636.5" stroke="#ffe93a" stroke-width="1.25"/>
<line x1="11" y1="348.5" x2="1733" y2="348.5" stroke="#dcdcdc" stroke-width="1.1" stroke-dasharray="1.05 1.95" stroke-dashoffset="-0.6" stroke-linecap="butt"/>
</g>
<g clip-path="url(#cd)" fill="none" stroke-linejoin="round">
<path d="M10.0,768.4 L10.0,803.5 L15.2,799.0 L21.8,794.6 L27.0,793.0 L33.5,792.0 L40.1,788.0 L45.3,789.3 L49.2,790.4 L53.2,785.2 L58.4,782.0 L63.6,778.9 L68.9,774.2 L72.8,768.9 L76.7,763.7 L81.9,761.6 L87.2,755.9 L93.7,750.1 L100.2,748.0 L106.8,745.9 L112.0,740.7 L115.9,738.9 L119.9,740.7 L125.1,747.5 L130.3,753.2 L135.6,761.1 L140.8,766.3 L146.0,764.2 L151.3,754.5 L156.5,750.6 L161.7,755.9 L169.6,761.1 L177.4,764.2 L182.6,765.8 L187.9,770.2 L193.1,774.7 L198.3,774.2 L203.6,771.6 L208.8,766.8 L215.3,765.0 L224.5,764.2 L231.0,758.5 L236.3,754.5 L242.8,753.8 L248.0,754.5 L252.0,751.1 L255.9,751.1 L259.8,755.9 L265.0,761.1 L271.6,763.7 L276.8,761.1 L283.3,751.9 L291.2,745.9 L297.7,740.7 L304.3,740.2 L312.1,739.6 L318.7,734.9 L323.9,734.1 L330.4,736.2 L334.4,736.2 L338.3,732.3 L343.5,731.8 L350.0,733.6 L355.3,737.5 L363.1,742.3 L371.0,746.7 L378.8,750.1 L386.7,755.3 L394.5,759.8 L401.1,760.6 L407.6,765.0 L412.8,766.8 L420.7,766.8 L428.5,766.3 L435.1,762.4 L440.3,757.2 L445.5,755.9 L452.1,751.9 L458.6,755.9 L465.1,759.8 L471.7,754.5 L478.2,753.2 L480.0,751.9 L486.5,749.6 L493.1,751.1 L499.6,754.5 L506.2,759.8 L510.1,765.0 L514.0,771.6 L521.9,777.3 L532.3,776.3 L542.8,776.8 L553.2,775.5 L563.7,776.3 L570.2,779.4 L575.5,791.2 L580.7,797.7 L585.9,802.4 L589.9,806.9 L596.4,807.6 L601.6,803.5 L606.9,800.8 L612.1,800.3 L616.0,801.6 L622.6,801.6 L627.8,795.1 L633.0,787.8 L638.3,782.0 L643.5,778.1 L647.4,778.9 L652.6,783.3 L659.2,789.3 L664.4,799.0 L668.3,806.1 L674.9,810.3 L681.4,812.6 L686.6,812.1 L691.9,807.6 L698.4,802.4 L705.0,799.0 L712.8,793.8 L720.6,789.3 L729.8,785.2 L736.3,778.1 L740.3,770.2 L741.6,765.0 L746.8,757.2 L754.7,749.3 L758.6,740.2 L762.5,732.3 L767.7,725.8 L771.7,723.2 L775.6,724.5 L779.5,729.7 L783.4,733.6 L788.7,732.3 L793.9,733.6 L800.4,733.6 L804.4,727.1 L808.3,717.9 L813.5,710.1 L817.4,703.5 L821.4,699.9 L829.2,699.1 L833.1,696.2 L838.4,691.0 L842.3,690.5 L846.2,693.1 L850.1,697.8 L854.1,702.2 L858.0,698.3 L863.2,693.9 L867.1,694.9 L872.4,697.8 L877.6,703.0 L882.8,709.3 L888.1,715.3 L892.0,717.9 L895.9,715.3 L899.8,711.4 L903.8,712.7 L909.0,720.5 L912.9,725.8 L918.1,727.9 L922.1,728.4 L926.0,731.3 L931.2,729.7 L936.4,725.8 L940.4,726.6 L945.6,731.0 L950.8,737.5 L954.2,739.8 L958.3,750.9 L962.5,762.0 L966.7,773.1 L970.8,778.7 L975.0,782.0 L979.2,778.7 L983.4,778.7 L987.5,774.5 L991.7,770.3 L995.9,772.3 L1000.0,775.9 L1004.2,774.5 L1008.4,779.5 L1012.5,783.4 L1018.1,783.4 L1023.7,786.2 L1027.8,785.6 L1032.0,791.2 L1036.2,805.1 L1040.3,827.3 L1044.5,852.3 L1048.7,878.7 L1052.8,882.9 L1058.4,886.2 L1065.3,887.9 L1069.5,886.2 L1073.7,878.7 L1077.8,869.0 L1082.0,853.7 L1086.2,835.6 L1090.4,819.0 L1095.9,805.1 L1100.1,795.3 L1104.3,791.2 L1108.4,787.0 L1112.6,777.3 L1116.2,773.7 L1120.9,777.8 L1125.1,788.4 L1129.3,796.7 L1134.8,795.6 L1140.4,792.6 L1145.9,794.8 L1151.5,793.1 L1157.1,799.0 L1162.6,800.9 L1166.8,802.8 L1171.0,801.5 L1175.1,802.3 L1178.5,799.0 L1182.1,806.5 L1186.2,814.8 L1191.2,819.8 L1194.6,817.6 L1198.7,827.3 L1203.5,837.0 L1208.5,835.6 L1214.0,834.3 L1219.6,830.1 L1225.2,824.0 L1230.7,817.6 L1236.3,812.0 L1241.8,805.1 L1246.0,800.1 L1250.2,798.1 L1254.3,792.6 L1258.5,785.1 L1262.7,776.7 L1266.3,773.1 L1269.6,762.0 L1273.8,750.9 L1278.0,743.4 L1282.1,738.4 L1286.9,736.1 L1291.3,737.8 L1294.6,744.5 L1298.8,753.7 L1302.4,760.0 L1305.8,752.8 L1308.0,743.4 L1311.9,738.9 L1315.5,748.1 L1319.6,757.8 L1323.8,767.5 L1327.4,775.9 L1332.2,778.7 L1336.9,782.3 L1341.3,785.6 L1345.2,784.2 L1350.2,777.3 L1355.8,768.9 L1360.8,763.4 L1365.5,759.8 L1369.7,756.4 L1373.8,751.7 L1378.0,748.1 L1382.2,750.9 L1387.7,749.5 L1394.7,747.5 L1401.6,745.3 L1410.0,744.8 L1415.5,744.8 L1419.7,747.3 L1423.9,746.7 L1426.7,742.5 L1430.8,737.0 L1435.0,734.2 L1439.2,729.5 L1442.5,725.9 L1444.7,723.1 L1444.7,768.4Z" fill="#67686e" stroke="none"/>
<line x1="11" y1="768.4" x2="1733" y2="768.4" stroke="#f0f0f0" stroke-width="1.4"/>
<path d="M10.0,800.8 C11.3,800.5 15.2,799.8 17.8,799.0 C20.5,798.3 23.1,797.1 25.7,796.4 C28.3,795.7 30.9,795.2 33.5,794.6 C36.2,793.9 38.8,793.0 41.4,792.5 C44.0,791.9 46.6,792.0 49.2,791.2 C51.9,790.4 54.5,788.9 57.1,787.8 C59.7,786.6 62.3,785.5 64.9,784.1 C67.5,782.7 70.2,781.3 72.8,779.4 C75.4,777.5 78.0,775.3 80.6,772.9 C83.2,770.5 85.9,767.4 88.5,765.0 C91.1,762.6 93.7,760.2 96.3,758.5 C98.9,756.7 101.6,756.1 104.2,754.5 C106.8,753.0 109.8,750.8 112.0,749.3 C114.2,747.9 115.5,746.7 117.2,745.9 C119.0,745.2 120.7,744.8 122.5,744.9 C124.2,744.9 126.0,745.6 127.7,746.2 C129.5,746.8 131.2,747.4 132.9,748.5 C134.7,749.7 136.4,751.7 138.2,753.2 C139.9,754.8 141.7,756.9 143.4,757.9 C145.1,759.0 146.9,759.3 148.6,759.3 C150.4,759.2 152.1,757.9 153.9,757.4 C155.6,756.9 157.4,756.6 159.1,756.4 C160.8,756.2 162.1,756.0 164.3,756.4 C166.5,756.7 169.6,757.7 172.2,758.5 C174.8,759.3 177.4,760.0 180.0,761.1 C182.6,762.2 185.7,763.8 187.9,765.0 C190.1,766.2 191.4,767.5 193.1,768.4 C194.8,769.3 196.6,769.9 198.3,770.2 C200.1,770.6 201.8,770.9 203.6,770.8 C205.3,770.6 206.6,770.0 208.8,769.5 C211.0,768.9 214.0,768.2 216.6,767.6 C219.3,767.1 221.9,767.1 224.5,766.3 C227.1,765.6 229.7,764.3 232.3,763.2 C235.0,762.1 237.6,760.7 240.2,759.8 C242.8,758.9 245.4,758.4 248.0,757.7 C250.6,756.9 253.7,755.6 255.9,755.3 C258.1,755.0 259.1,755.3 261.1,755.9 C263.1,756.4 265.5,757.7 267.7,758.5 C269.8,759.3 272.0,760.2 274.2,760.6 C276.4,760.9 278.6,761.0 280.7,760.6 C282.9,760.1 285.1,758.9 287.3,757.7 C289.4,756.5 291.6,754.8 293.8,753.2 C296.0,751.7 298.2,749.8 300.3,748.5 C302.5,747.2 304.7,746.2 306.9,745.4 C309.1,744.6 311.2,744.3 313.4,743.6 C315.6,742.8 317.8,741.6 320.0,740.7 C322.1,739.8 324.1,738.8 326.5,738.3 C328.9,737.9 332.0,738.4 334.4,738.1 C336.8,737.7 338.7,736.7 340.9,736.2 C343.1,735.8 345.0,735.3 347.4,735.2 C349.8,735.1 352.7,735.0 355.3,735.5 C357.9,735.9 360.5,737.1 363.1,738.1 C365.7,739.1 368.4,740.2 371.0,741.5 C373.6,742.7 376.2,744.0 378.8,745.4 C381.4,746.8 384.1,748.7 386.7,750.1 C389.3,751.5 391.9,752.8 394.5,754.0 C397.1,755.2 399.7,756.0 402.4,757.2 C405.0,758.3 407.6,760.0 410.2,761.1 C412.8,762.2 415.4,763.0 418.1,763.7 C420.7,764.4 423.3,764.9 425.9,765.0 C428.5,765.1 431.1,764.8 433.8,764.2 C436.4,763.7 439.0,762.6 441.6,761.6 C444.2,760.7 446.8,759.2 449.4,758.5 C452.1,757.7 454.7,757.2 457.3,757.2 C459.9,757.2 462.7,758.3 465.1,758.5 C467.5,758.6 469.5,758.3 471.7,757.9 C473.9,757.6 476.8,756.7 478.2,756.4 C479.6,756.0 478.4,756.4 480.0,755.9 C481.6,755.3 485.2,753.7 487.8,753.2 C490.5,752.8 493.1,752.8 495.7,753.0 C498.3,753.2 501.4,753.9 503.5,754.5 C505.7,755.2 506.6,755.6 508.8,757.2 C511.0,758.7 514.0,761.7 516.6,763.7 C519.2,765.8 521.9,768.1 524.5,769.5 C527.1,770.9 529.3,771.3 532.3,772.1 C535.4,772.9 539.3,773.6 542.8,774.2 C546.3,774.7 549.8,774.9 553.2,775.2 C556.7,775.5 560.7,775.5 563.7,776.0 C566.8,776.5 569.2,776.7 571.6,778.1 C573.9,779.4 575.9,782.2 578.1,784.1 C580.3,786.0 582.5,787.5 584.6,789.3 C586.8,791.2 589.0,793.4 591.2,795.1 C593.3,796.8 595.5,798.6 597.7,799.5 C599.9,800.5 602.1,800.7 604.2,800.8 C606.4,801.0 608.6,800.2 610.8,800.3 C613.0,800.4 615.4,801.2 617.3,801.4 C619.3,801.6 620.6,802.0 622.6,801.6 C624.5,801.2 626.9,800.2 629.1,799.0 C631.3,797.8 633.5,796.2 635.6,794.6 C637.8,793.0 640.2,790.8 642.2,789.3 C644.1,787.9 645.7,786.6 647.4,785.9 C649.2,785.2 650.7,785.0 652.6,785.2 C654.6,785.3 657.2,785.9 659.2,786.7 C661.1,787.6 662.4,788.6 664.4,790.4 C666.4,792.1 668.8,795.2 670.9,797.2 C673.1,799.2 675.3,800.9 677.5,802.4 C679.7,803.9 682.1,805.2 684.0,806.1 C686.0,807.0 687.3,807.5 689.3,807.6 C691.2,807.8 693.4,807.6 695.8,807.1 C698.2,806.6 700.8,805.6 703.6,804.5 C706.5,803.4 709.7,801.8 712.8,800.3 C715.9,798.8 718.9,797.1 722.0,795.6 C725.0,794.1 728.3,792.9 731.1,791.2 C733.9,789.4 736.3,787.8 739.0,785.2 C741.6,782.5 744.4,778.6 746.8,775.5 C749.2,772.3 751.2,769.6 753.3,766.3 C755.5,763.0 757.7,759.3 759.9,755.9 C762.1,752.4 764.2,748.2 766.4,745.4 C768.6,742.6 771.0,740.5 773.0,738.9 C774.9,737.2 776.2,736.2 778.2,735.5 C780.2,734.7 782.3,734.7 784.7,734.4 C787.1,734.1 790.0,734.0 792.6,733.9 C795.2,733.8 798.0,734.2 800.4,733.6 C802.8,733.0 804.8,731.8 807.0,730.2 C809.1,728.6 811.3,726.3 813.5,723.9 C815.7,721.6 817.9,718.3 820.0,716.1 C822.2,713.9 824.2,712.6 826.6,710.9 C829.0,709.1 832.0,707.4 834.4,705.6 C836.8,703.9 839.0,701.7 841.0,700.4 C842.9,699.1 844.5,698.1 846.2,697.8 C847.9,697.4 849.7,698.0 851.4,698.3 C853.2,698.6 854.9,699.6 856.7,699.6 C858.4,699.6 859.9,698.7 861.9,698.3 C863.9,697.9 866.3,697.4 868.4,697.3 C870.6,697.2 872.8,697.2 875.0,697.8 C877.2,698.4 879.3,699.5 881.5,700.9 C883.7,702.3 885.9,704.6 888.1,706.2 C890.2,707.7 892.4,709.3 894.6,710.1 C896.8,710.9 899.2,710.4 901.1,710.9 C903.1,711.3 904.2,711.4 906.4,712.7 C908.5,714.0 911.6,717.0 914.2,718.7 C916.8,720.5 919.7,721.9 922.1,723.2 C924.5,724.4 926.2,725.5 928.6,726.0 C931.0,726.6 934.1,726.4 936.4,726.6 C938.8,726.7 940.8,726.5 943.0,727.1 C945.2,727.7 947.7,729.3 949.5,730.2 C951.4,731.2 952.5,731.4 954.2,732.8 C955.9,734.2 957.9,735.6 959.7,738.4 C961.6,741.1 963.4,746.0 965.3,749.5 C967.1,753.0 969.0,756.5 970.8,759.2 C972.7,761.9 974.3,763.8 976.4,765.6 C978.5,767.4 980.8,769.0 983.4,769.8 C985.9,770.6 988.9,769.9 991.7,770.3 C994.5,770.7 997.5,771.7 1000.0,772.3 C1002.6,772.9 1004.4,773.0 1007.0,773.9 C1009.5,774.9 1012.5,776.6 1015.3,777.8 C1018.1,779.1 1021.1,780.4 1023.7,781.4 C1026.2,782.5 1028.5,782.4 1030.6,784.2 C1032.7,786.1 1034.3,789.1 1036.2,792.6 C1038.0,796.0 1040.1,800.4 1041.7,805.1 C1043.3,809.7 1044.5,815.3 1045.9,820.4 C1047.3,825.5 1048.4,830.3 1050.1,835.6 C1051.7,841.0 1053.8,847.7 1055.6,852.3 C1057.5,857.0 1059.3,860.6 1061.2,863.4 C1063.0,866.3 1064.9,867.9 1066.7,869.5 C1068.6,871.2 1070.7,872.5 1072.3,873.2 C1073.9,873.9 1075.1,874.0 1076.5,873.7 C1077.8,873.4 1079.2,872.6 1080.6,871.2 C1082.0,869.9 1083.4,868.1 1084.8,865.7 C1086.2,863.2 1087.3,860.3 1089.0,856.5 C1090.6,852.6 1092.7,847.5 1094.5,842.6 C1096.4,837.7 1098.2,832.2 1100.1,827.3 C1101.9,822.4 1103.8,817.8 1105.6,813.4 C1107.5,809.0 1109.6,804.1 1111.2,800.9 C1112.8,797.8 1114.0,796.1 1115.4,794.5 C1116.8,792.9 1117.9,791.8 1119.5,791.2 C1121.2,790.5 1123.2,790.4 1125.1,790.6 C1127.0,790.8 1128.3,791.8 1130.7,792.3 C1133.0,792.7 1136.2,793.2 1139.0,793.4 C1141.8,793.6 1144.8,793.6 1147.3,793.7 C1149.9,793.8 1152.0,793.5 1154.3,794.0 C1156.6,794.4 1158.9,795.5 1161.2,796.2 C1163.5,796.9 1165.9,797.6 1168.2,798.1 C1170.5,798.7 1173.3,799.3 1175.1,799.5 C1177.0,799.7 1177.7,798.8 1179.3,799.5 C1180.9,800.2 1183.0,802.3 1184.9,803.7 C1186.7,805.1 1188.8,806.8 1190.4,807.8 C1192.0,808.9 1193.0,808.7 1194.6,810.1 C1196.2,811.5 1198.3,814.2 1200.1,816.2 C1202.0,818.1 1203.8,820.1 1205.7,821.7 C1207.6,823.4 1209.4,824.8 1211.3,825.9 C1213.1,827.0 1215.0,827.9 1216.8,828.1 C1218.7,828.4 1220.3,827.9 1222.4,827.3 C1224.5,826.7 1227.0,825.8 1229.3,824.5 C1231.6,823.3 1234.0,821.7 1236.3,819.8 C1238.6,817.9 1240.9,815.4 1243.2,813.4 C1245.5,811.4 1248.1,809.7 1250.2,807.8 C1252.3,806.0 1253.6,804.8 1255.7,802.3 C1257.8,799.7 1260.4,796.0 1262.7,792.6 C1265.0,789.1 1267.5,785.2 1269.6,781.4 C1271.7,777.7 1273.3,773.8 1275.2,770.3 C1277.0,766.9 1278.9,763.4 1280.7,760.6 C1282.6,757.8 1284.7,755.5 1286.3,753.7 C1287.9,751.8 1289.1,750.4 1290.5,749.5 C1291.9,748.6 1293.2,748.1 1294.6,748.1 C1296.0,748.1 1297.3,748.8 1298.8,749.5 C1300.3,750.2 1301.9,752.3 1303.5,752.3 C1305.2,752.3 1307.0,750.3 1308.5,749.5 C1310.1,748.7 1311.3,747.5 1312.7,747.5 C1314.1,747.5 1315.2,748.2 1316.9,749.5 C1318.5,750.7 1320.6,753.0 1322.4,755.0 C1324.3,757.0 1326.1,759.4 1328.0,761.4 C1329.8,763.4 1331.7,765.3 1333.5,767.0 C1335.4,768.7 1337.3,770.3 1339.1,771.7 C1341.0,773.1 1342.8,774.5 1344.7,775.3 C1346.5,776.1 1348.4,776.5 1350.2,776.4 C1352.1,776.4 1353.9,775.7 1355.8,775.1 C1357.6,774.4 1359.5,773.4 1361.3,772.3 C1363.2,771.2 1365.0,769.9 1366.9,768.4 C1368.8,766.9 1370.6,764.9 1372.5,763.4 C1374.3,761.9 1375.9,760.5 1378.0,759.2 C1380.1,757.9 1382.4,756.7 1385.0,755.6 C1387.5,754.5 1390.5,753.7 1393.3,752.8 C1396.1,751.9 1398.9,750.8 1401.6,750.0 C1404.4,749.3 1407.4,748.6 1410.0,748.1 C1412.5,747.6 1414.6,747.4 1416.9,747.3 C1419.2,747.2 1421.8,748.1 1423.9,747.5 C1426.0,747.0 1427.3,745.2 1429.4,743.9 C1431.5,742.6 1433.8,741.4 1436.4,739.8 C1438.9,738.1 1443.3,735.1 1444.7,734.2" stroke="#e8384b" stroke-width="1.2"/>
</g>
<line x1="1733.5" y1="28" x2="1733.5" y2="943" stroke="#4d4d4d" stroke-width="1.3"/>
<line x1="11" y1="908.5" x2="1825" y2="908.5" stroke="#565656" stroke-width="1.4"/>
<line x1="11" y1="666.5" x2="1825" y2="666.5" stroke="#f2f2f2" stroke-width="1.3"/>
<path d="M11.9,966.1H23.9V981H17.8V972.2H11.9Z" fill="#d9d9d9"/>
<circle cx="29.0" cy="968.8" r="2.75" fill="#d9d9d9"/>
<path d="M34.4,966.1H41.8L35.9,981H29.0Z" fill="#d9d9d9"/>
</svg>
<span class="t" style="left:10.5px;top:9.0px;font-size:12.4px;color:#d6d6d6;font-weight:400;transform:scaleX(0.8706)">10月</span>
<span class="t" style="left:38.3px;top:9.0px;font-size:12.4px;color:#d6d6d6;font-weight:400;transform:scaleX(0.8994)">27,</span>
<span class="t" style="left:58.9px;top:9.0px;font-size:12.4px;color:#d6d6d6;font-weight:400;transform:scaleX(0.8993)">2025</span>
<span class="t" style="left:88.1px;top:9.0px;font-size:12.4px;color:#d6d6d6;font-weight:400;transform:scaleX(0.9157)">12:43</span>
<span class="t" style="left:121.0px;top:9.0px;font-size:12.4px;color:#d6d6d6;font-weight:400;transform:scaleX(0.7695)">UTC+9、</span>
<span class="t" style="left:167.3px;top:9.0px;font-size:12.4px;color:#d6d6d6;font-weight:400;transform:scaleX(0.9759)">takataba</span>
<span class="t" style="left:214.0px;top:9.0px;font-size:12.4px;color:#d6d6d6;font-weight:400;transform:scaleX(1.0330)">が</span>
<span class="t" style="left:226.8px;top:9.0px;font-size:12.4px;color:#d6d6d6;font-weight:400;transform:scaleX(0.9612)">TradingView.com</span>
<span class="t" style="left:317.8px;top:9.0px;font-size:12.4px;color:#d6d6d6;font-weight:400;transform:scaleX(0.9416)">で作成</span>
<span class="t" style="left:18.1px;top:35.7px;font-size:12.4px;color:#b5b8c0;font-weight:400;transform:scaleX(0.9086)">BTCUSDT SPOT <b>·</b> 4時間 <b>·</b> Bybit</span>
<span class="t" style="left:186.3px;top:35.7px;font-size:12.4px;color:#b5b8c0;font-weight:400;transform:scaleX(0.9564)">始値</span>
<span class="t" style="left:210.3px;top:35.7px;font-size:12.4px;color:#2fdc45;font-weight:400;transform:scaleX(0.9796)">114,550.8</span>
<span class="t" style="left:270.4px;top:35.7px;font-size:12.4px;color:#b5b8c0;font-weight:400;transform:scaleX(0.9564)">高値</span>
<span class="t" style="left:294.6px;top:35.7px;font-size:12.4px;color:#2fdc45;font-weight:400;transform:scaleX(0.9741)">115,453.0</span>
<span class="t" style="left:355.0px;top:35.7px;font-size:12.4px;color:#b5b8c0;font-weight:400;transform:scaleX(0.9564)">安値</span>
<span class="t" style="left:378.6px;top:35.7px;font-size:12.4px;color:#2fdc45;font-weight:400;transform:scaleX(0.9630)">114,362.3</span>
<span class="t" style="left:438.2px;top:35.7px;font-size:12.4px;color:#b5b8c0;font-weight:400;transform:scaleX(0.9564)">終値</span>
<span class="t" style="left:462.4px;top:35.7px;font-size:12.4px;color:#2fdc45;font-weight:400;transform:scaleX(0.9833)">114,961.5</span>
<span class="t" style="left:18.1px;top:52.6px;font-size:12.4px;color:#b5b8c0;font-weight:400;transform:scaleX(0.9462)">HMA (20, close)</span>
<span class="t" style="left:109.8px;top:52.6px;font-size:12.4px;color:#b863c7;font-weight:400;transform:scaleX(0.9557)">113,788.6</span>
<span class="t" style="left:18.1px;top:69.5px;font-size:12.4px;color:#b5b8c0;font-weight:400;transform:scaleX(0.9427)">BB (50, SMA, close, 2.5)</span>
<span class="t" style="left:153.9px;top:69.5px;font-size:12.4px;color:#4a8fe3;font-weight:400;transform:scaleX(0.9686)">115,157.3</span>
<span class="t" style="left:214.5px;top:69.5px;font-size:12.4px;color:#4a8fe3;font-weight:400;transform:scaleX(0.9469)">105,256.7</span>
<span class="t" style="left:18.1px;top:86.4px;font-size:12.4px;color:#b5b8c0;font-weight:400;transform:scaleX(0.9462)">HMA (80, close)</span>
<span class="t" style="left:109.8px;top:86.4px;font-size:12.4px;color:#4a8fe3;font-weight:400;transform:scaleX(0.9569)">111,673.1</span>
<span class="t" style="left:18.1px;top:103.5px;font-size:12.4px;color:#b5b8c0;font-weight:400;transform:scaleX(0.9464)">BB <b>·</b> 240 (50, SMA, close, 2.5)</span>
<span class="t" style="left:18.1px;top:120.5px;font-size:12.4px;color:#b5b8c0;font-weight:400;transform:scaleX(0.9439)">HMA (320, close)</span>
<span class="t" style="left:115.9px;top:120.5px;font-size:12.4px;color:#7fc883;font-weight:400;transform:scaleX(0.9630)">110,882.5</span>
<span class="t" style="left:18.1px;top:137.4px;font-size:12.4px;color:#b5b8c0;font-weight:400;transform:scaleX(0.9450)">HMA <b>·</b> 1D (320, close)</span>
<span class="t" style="left:18.1px;top:154.4px;font-size:12.4px;color:#b5b8c0;font-weight:400;transform:scaleX(0.9492)">HMA <b>·</b> 240 (320, close)</span>
<span class="t" style="left:18.1px;top:171.4px;font-size:12.4px;color:#b5b8c0;font-weight:400;transform:scaleX(0.9468)">HMA <b>·</b> 1D (80, close)</span>
<span class="t" style="left:18.1px;top:188.4px;font-size:12.4px;color:#b5b8c0;font-weight:400;transform:scaleX(0.9468)">HMA <b>·</b> 1D (20, close)</span>
<span class="t" style="left:18.1px;top:205.4px;font-size:12.4px;color:#b5b8c0;font-weight:400;transform:scaleX(0.9824)">一目均衡表® (9, 26, 52, 26)</span>
<span class="t" style="left:18.1px;top:676.3px;font-size:12.4px;color:#b5b8c0;font-weight:400;transform:scaleX(0.9377)">MACD (9, 17, close)</span>
<span class="t" style="left:1744.8px;top:40.2px;font-size:15.4px;color:#b4b7c0;font-weight:400;transform:scaleX(1.0134)">128,000.0</span>
<span class="t" style="left:1744.8px;top:131.7px;font-size:15.4px;color:#b4b7c0;font-weight:400;transform:scaleX(1.0134)">124,000.0</span>
<span class="t" style="left:1744.8px;top:177.5px;font-size:15.4px;color:#b4b7c0;font-weight:400;transform:scaleX(1.0134)">122,000.0</span>
<span class="t" style="left:1744.8px;top:223.2px;font-size:15.4px;color:#b4b7c0;font-weight:400;transform:scaleX(1.0134)">120,000.0</span>
<span class="t" style="left:1744.8px;top:269.0px;font-size:15.4px;color:#b4b7c0;font-weight:400;transform:scaleX(1.0308)">118,000.0</span>
<span class="t" style="left:1744.8px;top:314.8px;font-size:15.4px;color:#b4b7c0;font-weight:400;transform:scaleX(1.0308)">116,000.0</span>
<span class="t" style="left:1744.8px;top:360.5px;font-size:15.4px;color:#b4b7c0;font-weight:400;transform:scaleX(1.0308)">114,000.0</span>
<span class="t" style="left:1744.8px;top:406.3px;font-size:15.4px;color:#b4b7c0;font-weight:400;transform:scaleX(1.0308)">112,000.0</span>
<span class="t" style="left:1744.8px;top:452.1px;font-size:15.4px;color:#b4b7c0;font-weight:400;transform:scaleX(1.0308)">110,000.0</span>
<span class="t" style="left:1744.8px;top:497.8px;font-size:15.4px;color:#b4b7c0;font-weight:400;transform:scaleX(1.0134)">108,000.0</span>
<span class="t" style="left:1744.8px;top:543.6px;font-size:15.4px;color:#b4b7c0;font-weight:400;transform:scaleX(1.0134)">106,000.0</span>
<span class="t" style="left:1744.8px;top:589.3px;font-size:15.4px;color:#b4b7c0;font-weight:400;transform:scaleX(1.0134)">104,000.0</span>
<span class="t" style="left:1744.8px;top:635.1px;font-size:15.4px;color:#b4b7c0;font-weight:400;transform:scaleX(1.0134)">102,000.0</span>
<div style="position:absolute;left:1735px;top:667.3px;width:88px;height:30px;overflow:hidden"><span class="t" style="left:9.8px;top:-6.4px;font-size:15.4px;color:#b4b7c0;font-weight:400;transform:scaleX(1.0339)">2,000.0</span></div>
<span class="t" style="left:1744.8px;top:709.6px;font-size:15.4px;color:#b4b7c0;font-weight:400;transform:scaleX(1.0339)">1,000.0</span>
<span class="t" style="left:1744.8px;top:759.4px;font-size:15.4px;color:#b4b7c0;font-weight:400;transform:scaleX(1.0324)">0.0</span>
<span class="t" style="left:1744.8px;top:807.3px;font-size:15.4px;color:#b4b7c0;font-weight:400;transform:scaleX(1.0142)">−1,000.0</span>
<span class="t" style="left:1744.8px;top:856.0px;font-size:15.4px;color:#b4b7c0;font-weight:400;transform:scaleX(1.0142)">−2,000.0</span>
<span class="t" style="left:28.4px;top:916.8px;font-size:15.4px;color:#c9ccd3;font-weight:700;transform:scaleX(1.0020)">9月</span>
<span class="t" style="left:111.2px;top:916.8px;font-size:15.4px;color:#b4b7c0;font-weight:400;transform:scaleX(0.9343)">4</span>
<span class="t" style="left:186.0px;top:916.8px;font-size:15.4px;color:#b4b7c0;font-weight:400;transform:scaleX(0.9343)">7</span>
<span class="t" style="left:256.7px;top:916.8px;font-size:15.4px;color:#b4b7c0;font-weight:400;transform:scaleX(0.9460)">10</span>
<span class="t" style="left:331.5px;top:916.8px;font-size:15.4px;color:#b4b7c0;font-weight:400;transform:scaleX(0.9460)">13</span>
<span class="t" style="left:406.2px;top:916.8px;font-size:15.4px;color:#b4b7c0;font-weight:400;transform:scaleX(0.9460)">16</span>
<span class="t" style="left:481.0px;top:916.8px;font-size:15.4px;color:#b4b7c0;font-weight:400;transform:scaleX(0.9460)">19</span>
<span class="t" style="left:555.8px;top:916.8px;font-size:15.4px;color:#b4b7c0;font-weight:400;transform:scaleX(0.9460)">22</span>
<span class="t" style="left:630.6px;top:916.8px;font-size:15.4px;color:#b4b7c0;font-weight:400;transform:scaleX(0.9460)">25</span>
<span class="t" style="left:705.4px;top:916.8px;font-size:15.4px;color:#b4b7c0;font-weight:400;transform:scaleX(0.9460)">28</span>
<span class="t" style="left:772.0px;top:916.8px;font-size:15.4px;color:#c9ccd3;font-weight:700;transform:scaleX(1.0026)">10月</span>
<span class="t" style="left:859.1px;top:916.8px;font-size:15.4px;color:#b4b7c0;font-weight:400;transform:scaleX(0.9343)">4</span>
<span class="t" style="left:933.9px;top:916.8px;font-size:15.4px;color:#b4b7c0;font-weight:400;transform:scaleX(0.9343)">7</span>
<span class="t" style="left:1004.6px;top:916.8px;font-size:15.4px;color:#b4b7c0;font-weight:400;transform:scaleX(0.9460)">10</span>
<span class="t" style="left:1079.4px;top:916.8px;font-size:15.4px;color:#b4b7c0;font-weight:400;transform:scaleX(0.9460)">13</span>
<span class="t" style="left:1154.2px;top:916.8px;font-size:15.4px;color:#b4b7c0;font-weight:400;transform:scaleX(0.9460)">16</span>
<span class="t" style="left:1228.9px;top:916.8px;font-size:15.4px;color:#b4b7c0;font-weight:400;transform:scaleX(0.9460)">19</span>
<span class="t" style="left:1303.7px;top:916.8px;font-size:15.4px;color:#b4b7c0;font-weight:400;transform:scaleX(0.9460)">22</span>
<span class="t" style="left:1378.5px;top:916.8px;font-size:15.4px;color:#b4b7c0;font-weight:400;transform:scaleX(0.9460)">25</span>
<span class="t" style="left:1453.3px;top:916.8px;font-size:15.4px;color:#b4b7c0;font-weight:400;transform:scaleX(0.9460)">28</span>
<span class="t" style="left:1544.8px;top:916.8px;font-size:15.4px;color:#c9ccd3;font-weight:700;transform:scaleX(1.0293)">11月</span>
<span class="t" style="left:1631.9px;top:916.8px;font-size:15.4px;color:#b4b7c0;font-weight:400;transform:scaleX(0.9343)">4</span>
<span class="t" style="left:1706.7px;top:916.8px;font-size:15.4px;color:#b4b7c0;font-weight:400;transform:scaleX(0.9343)">7</span>
<span class="t" style="left:49.2px;top:963.2px;font-size:20.8px;color:#d9d9d9;font-weight:700;transform:scaleX(0.9883)">TradingView</span>
<svg width="1835" height="1004" viewBox="0 0 1835 1004">
<path d="M1734,85.0H1818.7a2.5,2.5 0 0 1 2.5,2.5V105.5a2.5,2.5 0 0 1 -2.5,2.5H1734Z" fill="#ffeb3b"/>
<path d="M1734,314.9H1818.7a2.5,2.5 0 0 1 2.5,2.5V335.4a2.5,2.5 0 0 1 -2.5,2.5H1734Z" fill="#ffeb3b"/>
<path d="M1734,412.0H1818.7a2.5,2.5 0 0 1 2.5,2.5V432.5a2.5,2.5 0 0 1 -2.5,2.5H1734Z" fill="#ffeb3b"/>
<path d="M1734,528.0H1818.7a2.5,2.5 0 0 1 2.5,2.5V548.5a2.5,2.5 0 0 1 -2.5,2.5H1734Z" fill="#ffeb3b"/>
<path d="M1734,600.1H1818.7a2.5,2.5 0 0 1 2.5,2.5V620.6a2.5,2.5 0 0 1 -2.5,2.5H1734Z" fill="#ffeb3b"/>
<path d="M1734,625.1H1818.7a2.5,2.5 0 0 1 2.5,2.5V645.6a2.5,2.5 0 0 1 -2.5,2.5H1734Z" fill="#ffeb3b"/>
<path d="M1734,337.5H1818.7a2.5,2.5 0 0 1 2.5,2.5V358.0a2.5,2.5 0 0 1 -2.5,2.5H1734Z" fill="#4caf50"/>
</svg>
<span class="t" style="left:1745.0px;top:86.7px;font-size:15.4px;color:#131313;font-weight:400;transform:scaleX(1.0046)">126,000.0</span>
<span class="t" style="left:1745.0px;top:316.6px;font-size:15.4px;color:#131313;font-weight:400;transform:scaleX(1.0219)">115,600.0</span>
<span class="t" style="left:1745.0px;top:413.7px;font-size:15.4px;color:#131313;font-weight:400;transform:scaleX(1.0395)">111,700.0</span>
<span class="t" style="left:1745.0px;top:529.7px;font-size:15.4px;color:#131313;font-weight:400;transform:scaleX(1.0046)">106,650.0</span>
<span class="t" style="left:1745.0px;top:601.8px;font-size:15.4px;color:#131313;font-weight:400;transform:scaleX(1.0046)">103,500.0</span>
<span class="t" style="left:1745.0px;top:626.8px;font-size:15.4px;color:#131313;font-weight:400;transform:scaleX(1.0046)">102,400.0</span>
<span class="t" style="-webkit-text-stroke:0.45px #fff;left:1745.0px;top:339.2px;font-size:15.4px;color:#ffffff;font-weight:400;transform:scaleX(1.0219)">114,961.5</span>
</body></html>
